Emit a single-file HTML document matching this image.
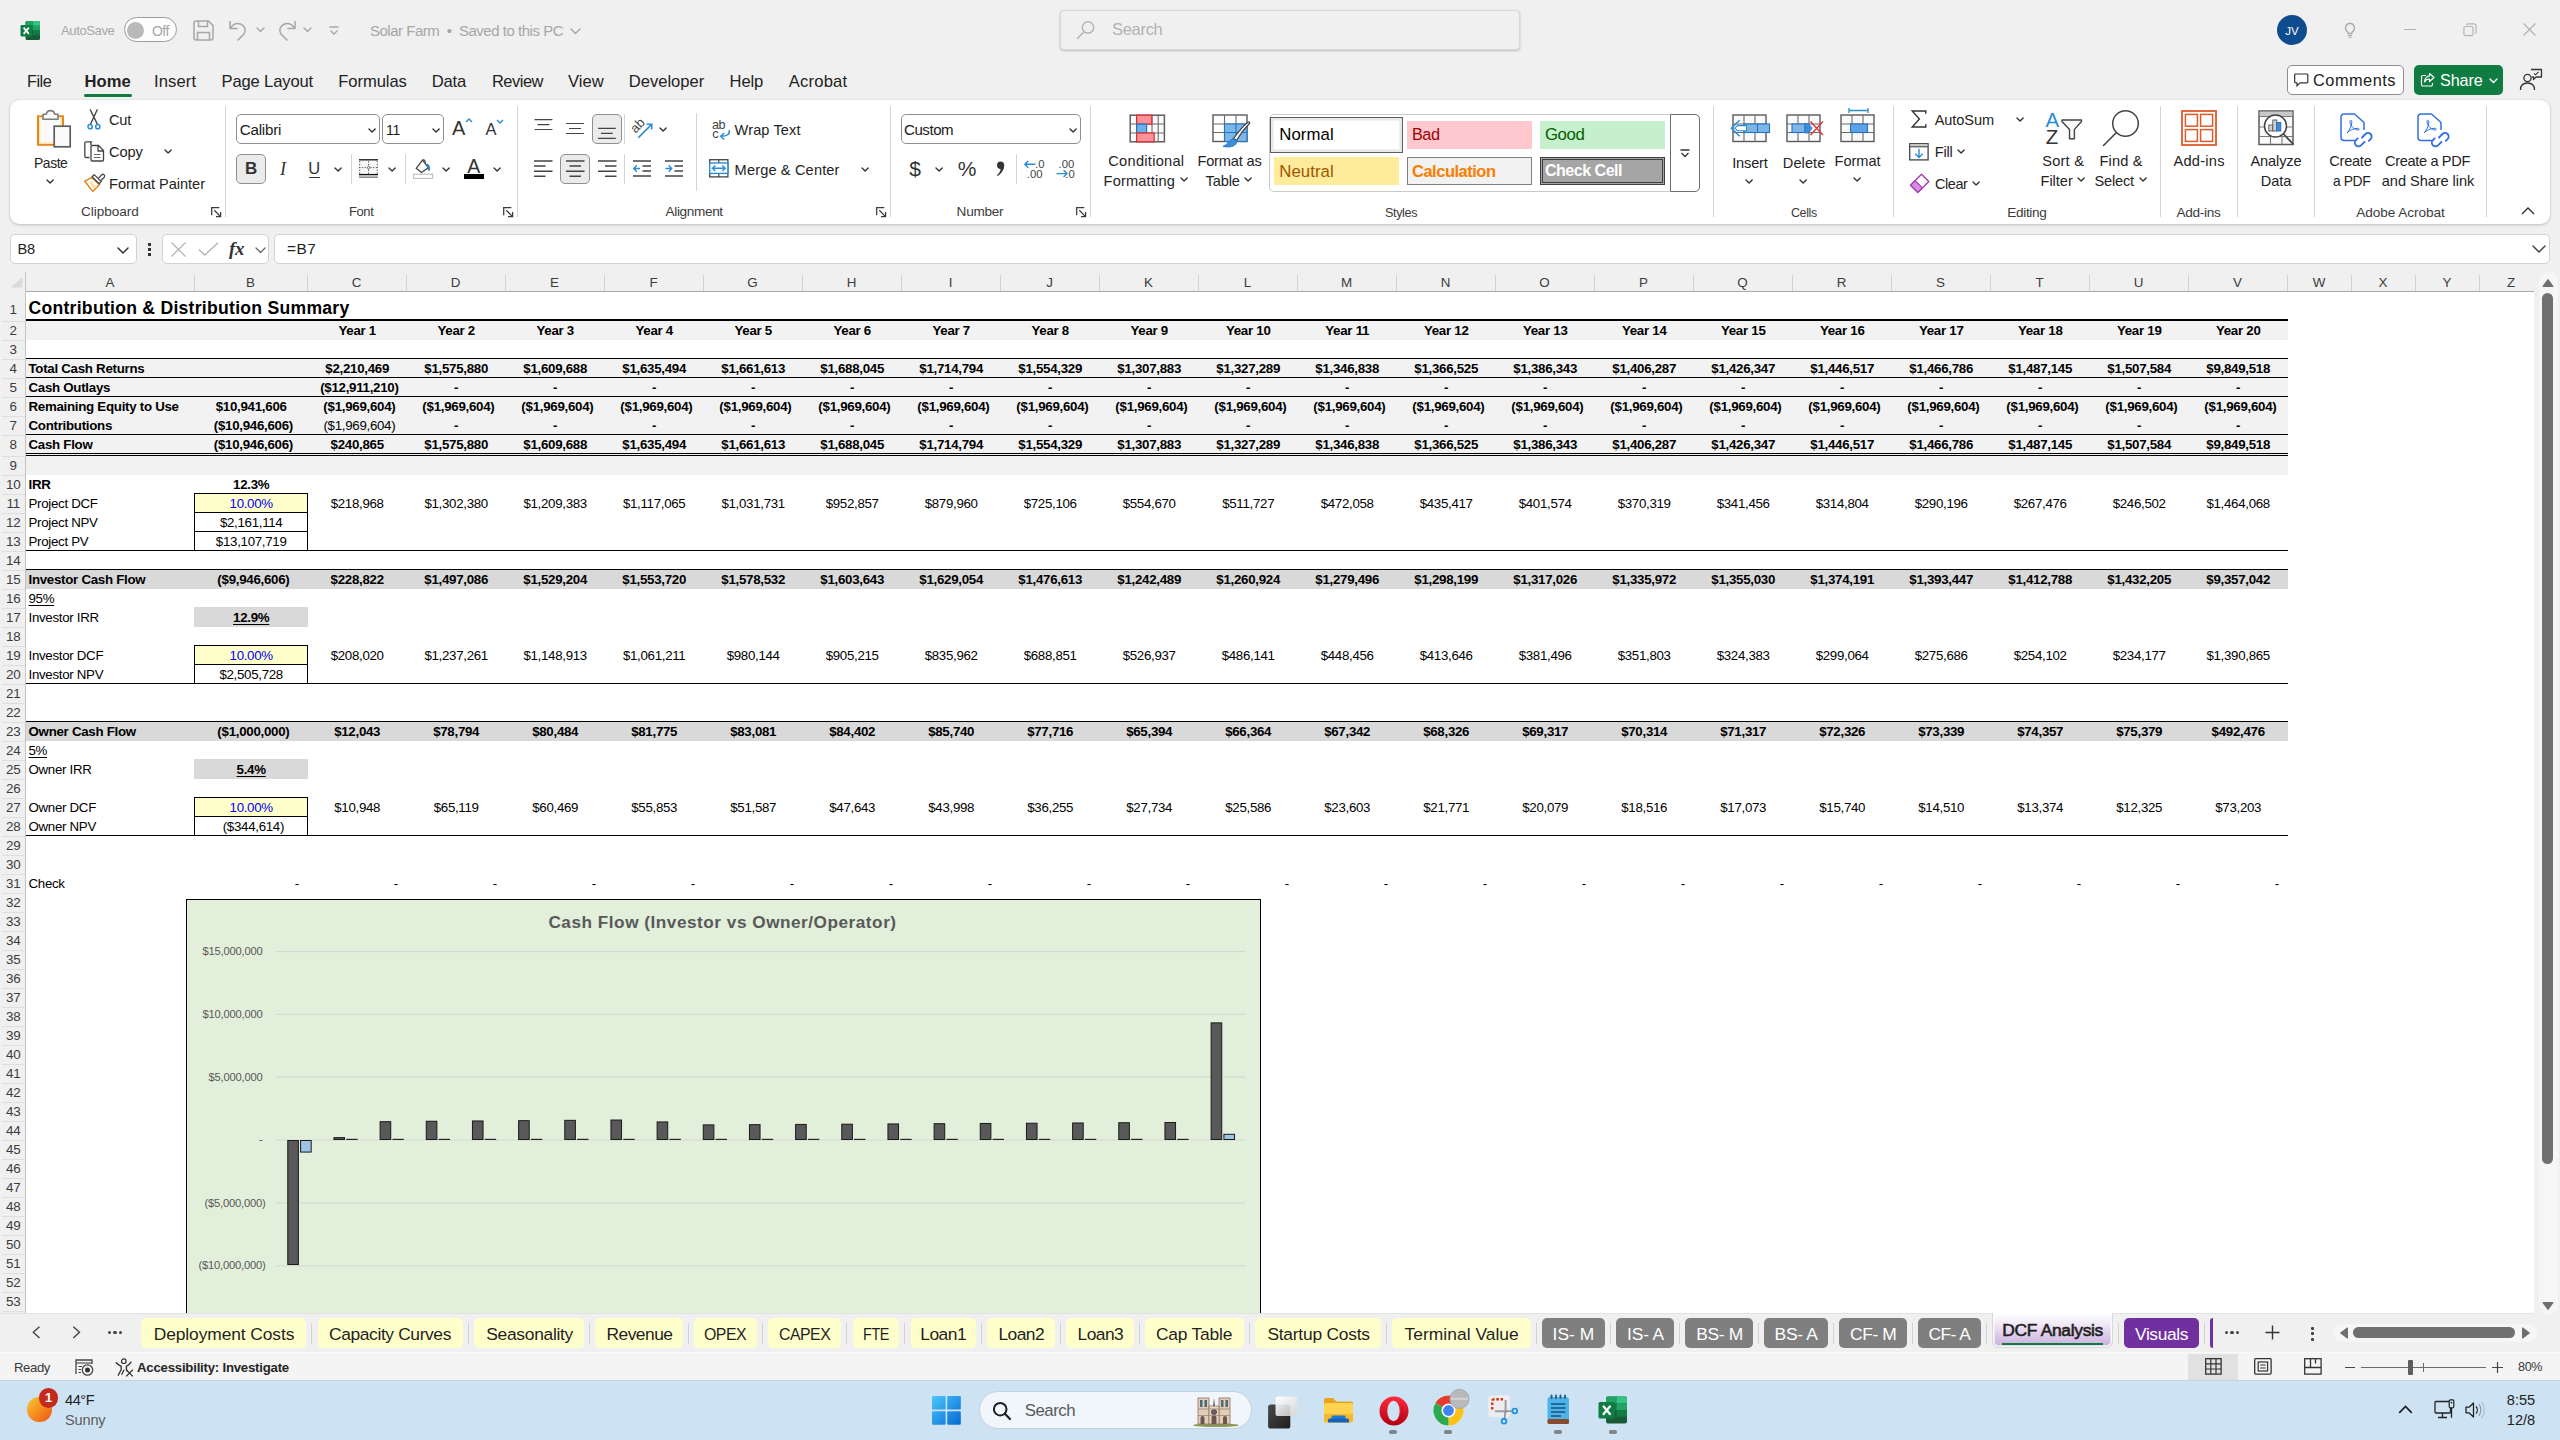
<!DOCTYPE html>
<html><head><meta charset="utf-8"><title>Solar Farm - Excel</title>
<style>
*{box-sizing:border-box}
html,body{margin:0;padding:0}
body{width:2560px;height:1440px;position:relative;overflow:hidden;background:#f0f0f0;font-family:"Liberation Sans",sans-serif;color:#242424}
.a{position:absolute}
.t{position:absolute;white-space:pre;line-height:20px}
svg{display:block;overflow:visible}
</style></head><body>
<div class="a" style="left:26px;top:292px;width:2508px;height:1021px;background:#fff;"></div>
<div class="a" style="left:0px;top:271px;width:2534px;height:21px;background:#f0f0f0;"></div>
<div class="a" style="left:26px;top:291px;width:2508px;height:1.2px;background:#ababab;"></div>
<span class="t" style="top:272.5px;font-size:13.4px;color:#3c3c3c;left:110.0px;transform:translateX(-50%);">A</span>
<div class="a" style="left:193.5px;top:275px;width:1px;height:16px;background:#d2d2d2;"></div>
<span class="t" style="top:272.5px;font-size:13.4px;color:#3c3c3c;left:250.5px;transform:translateX(-50%);">B</span>
<div class="a" style="left:306.5px;top:275px;width:1px;height:16px;background:#d2d2d2;"></div>
<span class="t" style="top:272.5px;font-size:13.4px;color:#3c3c3c;left:356.5px;transform:translateX(-50%);">C</span>
<div class="a" style="left:405.5px;top:275px;width:1px;height:16px;background:#d2d2d2;"></div>
<span class="t" style="top:272.5px;font-size:13.4px;color:#3c3c3c;left:455.5px;transform:translateX(-50%);">D</span>
<div class="a" style="left:504.5px;top:275px;width:1px;height:16px;background:#d2d2d2;"></div>
<span class="t" style="top:272.5px;font-size:13.4px;color:#3c3c3c;left:554.5px;transform:translateX(-50%);">E</span>
<div class="a" style="left:603.5px;top:275px;width:1px;height:16px;background:#d2d2d2;"></div>
<span class="t" style="top:272.5px;font-size:13.4px;color:#3c3c3c;left:653.5px;transform:translateX(-50%);">F</span>
<div class="a" style="left:702.5px;top:275px;width:1px;height:16px;background:#d2d2d2;"></div>
<span class="t" style="top:272.5px;font-size:13.4px;color:#3c3c3c;left:752.5px;transform:translateX(-50%);">G</span>
<div class="a" style="left:801.5px;top:275px;width:1px;height:16px;background:#d2d2d2;"></div>
<span class="t" style="top:272.5px;font-size:13.4px;color:#3c3c3c;left:851.5px;transform:translateX(-50%);">H</span>
<div class="a" style="left:900.5px;top:275px;width:1px;height:16px;background:#d2d2d2;"></div>
<span class="t" style="top:272.5px;font-size:13.4px;color:#3c3c3c;left:950.5px;transform:translateX(-50%);">I</span>
<div class="a" style="left:999.5px;top:275px;width:1px;height:16px;background:#d2d2d2;"></div>
<span class="t" style="top:272.5px;font-size:13.4px;color:#3c3c3c;left:1049.5px;transform:translateX(-50%);">J</span>
<div class="a" style="left:1098.5px;top:275px;width:1px;height:16px;background:#d2d2d2;"></div>
<span class="t" style="top:272.5px;font-size:13.4px;color:#3c3c3c;left:1148.5px;transform:translateX(-50%);">K</span>
<div class="a" style="left:1197.5px;top:275px;width:1px;height:16px;background:#d2d2d2;"></div>
<span class="t" style="top:272.5px;font-size:13.4px;color:#3c3c3c;left:1247.5px;transform:translateX(-50%);">L</span>
<div class="a" style="left:1296.5px;top:275px;width:1px;height:16px;background:#d2d2d2;"></div>
<span class="t" style="top:272.5px;font-size:13.4px;color:#3c3c3c;left:1346.5px;transform:translateX(-50%);">M</span>
<div class="a" style="left:1395.5px;top:275px;width:1px;height:16px;background:#d2d2d2;"></div>
<span class="t" style="top:272.5px;font-size:13.4px;color:#3c3c3c;left:1445.5px;transform:translateX(-50%);">N</span>
<div class="a" style="left:1494.5px;top:275px;width:1px;height:16px;background:#d2d2d2;"></div>
<span class="t" style="top:272.5px;font-size:13.4px;color:#3c3c3c;left:1544.5px;transform:translateX(-50%);">O</span>
<div class="a" style="left:1593.5px;top:275px;width:1px;height:16px;background:#d2d2d2;"></div>
<span class="t" style="top:272.5px;font-size:13.4px;color:#3c3c3c;left:1643.5px;transform:translateX(-50%);">P</span>
<div class="a" style="left:1692.5px;top:275px;width:1px;height:16px;background:#d2d2d2;"></div>
<span class="t" style="top:272.5px;font-size:13.4px;color:#3c3c3c;left:1742.5px;transform:translateX(-50%);">Q</span>
<div class="a" style="left:1791.5px;top:275px;width:1px;height:16px;background:#d2d2d2;"></div>
<span class="t" style="top:272.5px;font-size:13.4px;color:#3c3c3c;left:1841.5px;transform:translateX(-50%);">R</span>
<div class="a" style="left:1890.5px;top:275px;width:1px;height:16px;background:#d2d2d2;"></div>
<span class="t" style="top:272.5px;font-size:13.4px;color:#3c3c3c;left:1940.5px;transform:translateX(-50%);">S</span>
<div class="a" style="left:1989.5px;top:275px;width:1px;height:16px;background:#d2d2d2;"></div>
<span class="t" style="top:272.5px;font-size:13.4px;color:#3c3c3c;left:2039.5px;transform:translateX(-50%);">T</span>
<div class="a" style="left:2088.5px;top:275px;width:1px;height:16px;background:#d2d2d2;"></div>
<span class="t" style="top:272.5px;font-size:13.4px;color:#3c3c3c;left:2138.5px;transform:translateX(-50%);">U</span>
<div class="a" style="left:2187.5px;top:275px;width:1px;height:16px;background:#d2d2d2;"></div>
<span class="t" style="top:272.5px;font-size:13.4px;color:#3c3c3c;left:2237.5px;transform:translateX(-50%);">V</span>
<div class="a" style="left:2286.5px;top:275px;width:1px;height:16px;background:#d2d2d2;"></div>
<span class="t" style="top:272.5px;font-size:13.4px;color:#3c3c3c;left:2319.0px;transform:translateX(-50%);">W</span>
<div class="a" style="left:2350.5px;top:275px;width:1px;height:16px;background:#d2d2d2;"></div>
<span class="t" style="top:272.5px;font-size:13.4px;color:#3c3c3c;left:2383.0px;transform:translateX(-50%);">X</span>
<div class="a" style="left:2414.5px;top:275px;width:1px;height:16px;background:#d2d2d2;"></div>
<span class="t" style="top:272.5px;font-size:13.4px;color:#3c3c3c;left:2447.0px;transform:translateX(-50%);">Y</span>
<div class="a" style="left:2478.5px;top:275px;width:1px;height:16px;background:#d2d2d2;"></div>
<span class="t" style="top:272.5px;font-size:13.4px;color:#3c3c3c;left:2511.0px;transform:translateX(-50%);">Z</span>
<svg class="a" style="left:9.5px;top:277px;" width="13" height="11" viewBox="0 0 13 11"><path d="M12.5 0 L12.5 10.5 L1 10.5 Z" fill="#dadada"/></svg>
<div class="a" style="left:0px;top:292px;width:26px;height:1021px;background:#f0f0f0;"></div>
<div class="a" style="left:25px;top:272px;width:1px;height:1041px;background:#c4c4c4;"></div>
<div class="a" style="left:2px;top:320.5px;width:23px;height:1px;background:#dedede;"></div>
<span class="t" style="top:300.0px;font-size:13.4px;color:#3c3c3c;letter-spacing:-0.300px;left:13.2px;transform:translateX(-50%);">1</span>
<div class="a" style="left:2px;top:339.5px;width:23px;height:1px;background:#dedede;"></div>
<span class="t" style="top:321.0px;font-size:13.4px;color:#3c3c3c;letter-spacing:-0.300px;left:13.2px;transform:translateX(-50%);">2</span>
<div class="a" style="left:2px;top:358.5px;width:23px;height:1px;background:#dedede;"></div>
<span class="t" style="top:340.0px;font-size:13.4px;color:#3c3c3c;letter-spacing:-0.300px;left:13.2px;transform:translateX(-50%);">3</span>
<div class="a" style="left:2px;top:377.5px;width:23px;height:1px;background:#dedede;"></div>
<span class="t" style="top:359.0px;font-size:13.4px;color:#3c3c3c;letter-spacing:-0.300px;left:13.2px;transform:translateX(-50%);">4</span>
<div class="a" style="left:2px;top:396.5px;width:23px;height:1px;background:#dedede;"></div>
<span class="t" style="top:378.0px;font-size:13.4px;color:#3c3c3c;letter-spacing:-0.300px;left:13.2px;transform:translateX(-50%);">5</span>
<div class="a" style="left:2px;top:415.5px;width:23px;height:1px;background:#dedede;"></div>
<span class="t" style="top:397.0px;font-size:13.4px;color:#3c3c3c;letter-spacing:-0.300px;left:13.2px;transform:translateX(-50%);">6</span>
<div class="a" style="left:2px;top:434.5px;width:23px;height:1px;background:#dedede;"></div>
<span class="t" style="top:416.0px;font-size:13.4px;color:#3c3c3c;letter-spacing:-0.300px;left:13.2px;transform:translateX(-50%);">7</span>
<div class="a" style="left:2px;top:455.5px;width:23px;height:1px;background:#dedede;"></div>
<span class="t" style="top:435.0px;font-size:13.4px;color:#3c3c3c;letter-spacing:-0.300px;left:13.2px;transform:translateX(-50%);">8</span>
<div class="a" style="left:2px;top:474.5px;width:23px;height:1px;background:#dedede;"></div>
<span class="t" style="top:456.0px;font-size:13.4px;color:#3c3c3c;letter-spacing:-0.300px;left:13.2px;transform:translateX(-50%);">9</span>
<div class="a" style="left:2px;top:493.5px;width:23px;height:1px;background:#dedede;"></div>
<span class="t" style="top:475.0px;font-size:13.4px;color:#3c3c3c;letter-spacing:-0.300px;left:13.2px;transform:translateX(-50%);">10</span>
<div class="a" style="left:2px;top:512.5px;width:23px;height:1px;background:#dedede;"></div>
<span class="t" style="top:494.0px;font-size:13.4px;color:#3c3c3c;letter-spacing:-0.300px;left:13.2px;transform:translateX(-50%);">11</span>
<div class="a" style="left:2px;top:531.5px;width:23px;height:1px;background:#dedede;"></div>
<span class="t" style="top:513.0px;font-size:13.4px;color:#3c3c3c;letter-spacing:-0.300px;left:13.2px;transform:translateX(-50%);">12</span>
<div class="a" style="left:2px;top:550.5px;width:23px;height:1px;background:#dedede;"></div>
<span class="t" style="top:532.0px;font-size:13.4px;color:#3c3c3c;letter-spacing:-0.300px;left:13.2px;transform:translateX(-50%);">13</span>
<div class="a" style="left:2px;top:569.5px;width:23px;height:1px;background:#dedede;"></div>
<span class="t" style="top:551.0px;font-size:13.4px;color:#3c3c3c;letter-spacing:-0.300px;left:13.2px;transform:translateX(-50%);">14</span>
<div class="a" style="left:2px;top:588.5px;width:23px;height:1px;background:#dedede;"></div>
<span class="t" style="top:570.0px;font-size:13.4px;color:#3c3c3c;letter-spacing:-0.300px;left:13.2px;transform:translateX(-50%);">15</span>
<div class="a" style="left:2px;top:607.5px;width:23px;height:1px;background:#dedede;"></div>
<span class="t" style="top:589.0px;font-size:13.4px;color:#3c3c3c;letter-spacing:-0.300px;left:13.2px;transform:translateX(-50%);">16</span>
<div class="a" style="left:2px;top:626.5px;width:23px;height:1px;background:#dedede;"></div>
<span class="t" style="top:608.0px;font-size:13.4px;color:#3c3c3c;letter-spacing:-0.300px;left:13.2px;transform:translateX(-50%);">17</span>
<div class="a" style="left:2px;top:645.5px;width:23px;height:1px;background:#dedede;"></div>
<span class="t" style="top:627.0px;font-size:13.4px;color:#3c3c3c;letter-spacing:-0.300px;left:13.2px;transform:translateX(-50%);">18</span>
<div class="a" style="left:2px;top:664.5px;width:23px;height:1px;background:#dedede;"></div>
<span class="t" style="top:646.0px;font-size:13.4px;color:#3c3c3c;letter-spacing:-0.300px;left:13.2px;transform:translateX(-50%);">19</span>
<div class="a" style="left:2px;top:683.5px;width:23px;height:1px;background:#dedede;"></div>
<span class="t" style="top:665.0px;font-size:13.4px;color:#3c3c3c;letter-spacing:-0.300px;left:13.2px;transform:translateX(-50%);">20</span>
<div class="a" style="left:2px;top:702.5px;width:23px;height:1px;background:#dedede;"></div>
<span class="t" style="top:684.0px;font-size:13.4px;color:#3c3c3c;letter-spacing:-0.300px;left:13.2px;transform:translateX(-50%);">21</span>
<div class="a" style="left:2px;top:721.5px;width:23px;height:1px;background:#dedede;"></div>
<span class="t" style="top:703.0px;font-size:13.4px;color:#3c3c3c;letter-spacing:-0.300px;left:13.2px;transform:translateX(-50%);">22</span>
<div class="a" style="left:2px;top:740.5px;width:23px;height:1px;background:#dedede;"></div>
<span class="t" style="top:722.0px;font-size:13.4px;color:#3c3c3c;letter-spacing:-0.300px;left:13.2px;transform:translateX(-50%);">23</span>
<div class="a" style="left:2px;top:759.5px;width:23px;height:1px;background:#dedede;"></div>
<span class="t" style="top:741.0px;font-size:13.4px;color:#3c3c3c;letter-spacing:-0.300px;left:13.2px;transform:translateX(-50%);">24</span>
<div class="a" style="left:2px;top:778.5px;width:23px;height:1px;background:#dedede;"></div>
<span class="t" style="top:760.0px;font-size:13.4px;color:#3c3c3c;letter-spacing:-0.300px;left:13.2px;transform:translateX(-50%);">25</span>
<div class="a" style="left:2px;top:797.5px;width:23px;height:1px;background:#dedede;"></div>
<span class="t" style="top:779.0px;font-size:13.4px;color:#3c3c3c;letter-spacing:-0.300px;left:13.2px;transform:translateX(-50%);">26</span>
<div class="a" style="left:2px;top:816.5px;width:23px;height:1px;background:#dedede;"></div>
<span class="t" style="top:798.0px;font-size:13.4px;color:#3c3c3c;letter-spacing:-0.300px;left:13.2px;transform:translateX(-50%);">27</span>
<div class="a" style="left:2px;top:835.5px;width:23px;height:1px;background:#dedede;"></div>
<span class="t" style="top:817.0px;font-size:13.4px;color:#3c3c3c;letter-spacing:-0.300px;left:13.2px;transform:translateX(-50%);">28</span>
<div class="a" style="left:2px;top:854.5px;width:23px;height:1px;background:#dedede;"></div>
<span class="t" style="top:836.0px;font-size:13.4px;color:#3c3c3c;letter-spacing:-0.300px;left:13.2px;transform:translateX(-50%);">29</span>
<div class="a" style="left:2px;top:873.5px;width:23px;height:1px;background:#dedede;"></div>
<span class="t" style="top:855.0px;font-size:13.4px;color:#3c3c3c;letter-spacing:-0.300px;left:13.2px;transform:translateX(-50%);">30</span>
<div class="a" style="left:2px;top:892.5px;width:23px;height:1px;background:#dedede;"></div>
<span class="t" style="top:874.0px;font-size:13.4px;color:#3c3c3c;letter-spacing:-0.300px;left:13.2px;transform:translateX(-50%);">31</span>
<div class="a" style="left:2px;top:911.5px;width:23px;height:1px;background:#dedede;"></div>
<span class="t" style="top:893.0px;font-size:13.4px;color:#3c3c3c;letter-spacing:-0.300px;left:13.2px;transform:translateX(-50%);">32</span>
<div class="a" style="left:2px;top:930.5px;width:23px;height:1px;background:#dedede;"></div>
<span class="t" style="top:912.0px;font-size:13.4px;color:#3c3c3c;letter-spacing:-0.300px;left:13.2px;transform:translateX(-50%);">33</span>
<div class="a" style="left:2px;top:949.5px;width:23px;height:1px;background:#dedede;"></div>
<span class="t" style="top:931.0px;font-size:13.4px;color:#3c3c3c;letter-spacing:-0.300px;left:13.2px;transform:translateX(-50%);">34</span>
<div class="a" style="left:2px;top:968.5px;width:23px;height:1px;background:#dedede;"></div>
<span class="t" style="top:950.0px;font-size:13.4px;color:#3c3c3c;letter-spacing:-0.300px;left:13.2px;transform:translateX(-50%);">35</span>
<div class="a" style="left:2px;top:987.5px;width:23px;height:1px;background:#dedede;"></div>
<span class="t" style="top:969.0px;font-size:13.4px;color:#3c3c3c;letter-spacing:-0.300px;left:13.2px;transform:translateX(-50%);">36</span>
<div class="a" style="left:2px;top:1006.5px;width:23px;height:1px;background:#dedede;"></div>
<span class="t" style="top:988.0px;font-size:13.4px;color:#3c3c3c;letter-spacing:-0.300px;left:13.2px;transform:translateX(-50%);">37</span>
<div class="a" style="left:2px;top:1025.5px;width:23px;height:1px;background:#dedede;"></div>
<span class="t" style="top:1007.0px;font-size:13.4px;color:#3c3c3c;letter-spacing:-0.300px;left:13.2px;transform:translateX(-50%);">38</span>
<div class="a" style="left:2px;top:1044.5px;width:23px;height:1px;background:#dedede;"></div>
<span class="t" style="top:1026.0px;font-size:13.4px;color:#3c3c3c;letter-spacing:-0.300px;left:13.2px;transform:translateX(-50%);">39</span>
<div class="a" style="left:2px;top:1063.5px;width:23px;height:1px;background:#dedede;"></div>
<span class="t" style="top:1045.0px;font-size:13.4px;color:#3c3c3c;letter-spacing:-0.300px;left:13.2px;transform:translateX(-50%);">40</span>
<div class="a" style="left:2px;top:1082.5px;width:23px;height:1px;background:#dedede;"></div>
<span class="t" style="top:1064.0px;font-size:13.4px;color:#3c3c3c;letter-spacing:-0.300px;left:13.2px;transform:translateX(-50%);">41</span>
<div class="a" style="left:2px;top:1101.5px;width:23px;height:1px;background:#dedede;"></div>
<span class="t" style="top:1083.0px;font-size:13.4px;color:#3c3c3c;letter-spacing:-0.300px;left:13.2px;transform:translateX(-50%);">42</span>
<div class="a" style="left:2px;top:1120.5px;width:23px;height:1px;background:#dedede;"></div>
<span class="t" style="top:1102.0px;font-size:13.4px;color:#3c3c3c;letter-spacing:-0.300px;left:13.2px;transform:translateX(-50%);">43</span>
<div class="a" style="left:2px;top:1139.5px;width:23px;height:1px;background:#dedede;"></div>
<span class="t" style="top:1121.0px;font-size:13.4px;color:#3c3c3c;letter-spacing:-0.300px;left:13.2px;transform:translateX(-50%);">44</span>
<div class="a" style="left:2px;top:1158.5px;width:23px;height:1px;background:#dedede;"></div>
<span class="t" style="top:1140.0px;font-size:13.4px;color:#3c3c3c;letter-spacing:-0.300px;left:13.2px;transform:translateX(-50%);">45</span>
<div class="a" style="left:2px;top:1177.5px;width:23px;height:1px;background:#dedede;"></div>
<span class="t" style="top:1159.0px;font-size:13.4px;color:#3c3c3c;letter-spacing:-0.300px;left:13.2px;transform:translateX(-50%);">46</span>
<div class="a" style="left:2px;top:1196.5px;width:23px;height:1px;background:#dedede;"></div>
<span class="t" style="top:1178.0px;font-size:13.4px;color:#3c3c3c;letter-spacing:-0.300px;left:13.2px;transform:translateX(-50%);">47</span>
<div class="a" style="left:2px;top:1215.5px;width:23px;height:1px;background:#dedede;"></div>
<span class="t" style="top:1197.0px;font-size:13.4px;color:#3c3c3c;letter-spacing:-0.300px;left:13.2px;transform:translateX(-50%);">48</span>
<div class="a" style="left:2px;top:1234.5px;width:23px;height:1px;background:#dedede;"></div>
<span class="t" style="top:1216.0px;font-size:13.4px;color:#3c3c3c;letter-spacing:-0.300px;left:13.2px;transform:translateX(-50%);">49</span>
<div class="a" style="left:2px;top:1253.5px;width:23px;height:1px;background:#dedede;"></div>
<span class="t" style="top:1235.0px;font-size:13.4px;color:#3c3c3c;letter-spacing:-0.300px;left:13.2px;transform:translateX(-50%);">50</span>
<div class="a" style="left:2px;top:1272.5px;width:23px;height:1px;background:#dedede;"></div>
<span class="t" style="top:1254.0px;font-size:13.4px;color:#3c3c3c;letter-spacing:-0.300px;left:13.2px;transform:translateX(-50%);">51</span>
<div class="a" style="left:2px;top:1291.5px;width:23px;height:1px;background:#dedede;"></div>
<span class="t" style="top:1273.0px;font-size:13.4px;color:#3c3c3c;letter-spacing:-0.300px;left:13.2px;transform:translateX(-50%);">52</span>
<div class="a" style="left:2px;top:1310.5px;width:23px;height:1px;background:#dedede;"></div>
<span class="t" style="top:1292.0px;font-size:13.4px;color:#3c3c3c;letter-spacing:-0.300px;left:13.2px;transform:translateX(-50%);">53</span>
<div class="a" style="left:26px;top:321px;width:2262px;height:19px;background:#f2f2f2;"></div>
<div class="a" style="left:26px;top:359px;width:2262px;height:116px;background:#f2f2f2;"></div>
<div class="a" style="left:26px;top:570px;width:2262px;height:19px;background:#d9d9d9;"></div>
<div class="a" style="left:26px;top:722px;width:2262px;height:19px;background:#d9d9d9;"></div>
<div class="a" style="left:194px;top:607px;width:114px;height:20px;background:#d9d9d9;"></div>
<div class="a" style="left:194px;top:759px;width:114px;height:20px;background:#d9d9d9;"></div>
<div class="a" style="left:26px;top:319px;width:2262px;height:2px;background:#000;"></div>
<div class="a" style="left:26px;top:358px;width:2262px;height:1px;background:#000;"></div>
<div class="a" style="left:26px;top:377px;width:2262px;height:1px;background:#000;"></div>
<div class="a" style="left:26px;top:396px;width:2262px;height:1px;background:#000;"></div>
<div class="a" style="left:26px;top:434px;width:2262px;height:1px;background:#000;"></div>
<div class="a" style="left:26px;top:453px;width:2262px;height:1px;background:#000;"></div>
<div class="a" style="left:26px;top:455px;width:2262px;height:1px;background:#000;"></div>
<div class="a" style="left:26px;top:550px;width:2262px;height:1px;background:#000;"></div>
<div class="a" style="left:26px;top:569px;width:2262px;height:1px;background:#000;"></div>
<div class="a" style="left:26px;top:683px;width:2262px;height:1px;background:#000;"></div>
<div class="a" style="left:26px;top:721px;width:2262px;height:1px;background:#000;"></div>
<div class="a" style="left:26px;top:835px;width:2262px;height:1px;background:#000;"></div>
<div class="a" style="left:194px;top:493px;width:113px;height:20px;background:#ffffcc;"></div>
<div class="a" style="left:194px;top:493px;width:1px;height:58px;background:#000;"></div>
<div class="a" style="left:306.5px;top:493px;width:1px;height:58px;background:#000;"></div>
<div class="a" style="left:194px;top:493px;width:113px;height:1px;background:#000;"></div>
<div class="a" style="left:194px;top:512px;width:113px;height:1px;background:#000;"></div>
<div class="a" style="left:194px;top:531px;width:113px;height:1px;background:#000;"></div>
<div class="a" style="left:194px;top:645px;width:113px;height:20px;background:#ffffcc;"></div>
<div class="a" style="left:194px;top:645px;width:1px;height:39px;background:#000;"></div>
<div class="a" style="left:306.5px;top:645px;width:1px;height:39px;background:#000;"></div>
<div class="a" style="left:194px;top:645px;width:113px;height:1px;background:#000;"></div>
<div class="a" style="left:194px;top:664px;width:113px;height:1px;background:#000;"></div>
<div class="a" style="left:194px;top:797px;width:113px;height:20px;background:#ffffcc;"></div>
<div class="a" style="left:194px;top:797px;width:1px;height:39px;background:#000;"></div>
<div class="a" style="left:306.5px;top:797px;width:1px;height:39px;background:#000;"></div>
<div class="a" style="left:194px;top:797px;width:113px;height:1px;background:#000;"></div>
<div class="a" style="left:194px;top:816px;width:113px;height:1px;background:#000;"></div>
<span class="t" style="top:297.5px;font-size:17.6px;color:#000;font-weight:700;letter-spacing:0.263px;left:28.5px;">Contribution &amp; Distribution Summary</span>
<span class="t" style="top:320.8px;font-size:13.3px;color:#000;font-weight:700;letter-spacing:-0.280px;left:357.2px;transform:translateX(-50%);">Year 1</span>
<span class="t" style="top:320.8px;font-size:13.3px;color:#000;font-weight:700;letter-spacing:-0.280px;left:456.2px;transform:translateX(-50%);">Year 2</span>
<span class="t" style="top:320.8px;font-size:13.3px;color:#000;font-weight:700;letter-spacing:-0.280px;left:555.2px;transform:translateX(-50%);">Year 3</span>
<span class="t" style="top:320.8px;font-size:13.3px;color:#000;font-weight:700;letter-spacing:-0.280px;left:654.2px;transform:translateX(-50%);">Year 4</span>
<span class="t" style="top:320.8px;font-size:13.3px;color:#000;font-weight:700;letter-spacing:-0.280px;left:753.2px;transform:translateX(-50%);">Year 5</span>
<span class="t" style="top:320.8px;font-size:13.3px;color:#000;font-weight:700;letter-spacing:-0.280px;left:852.2px;transform:translateX(-50%);">Year 6</span>
<span class="t" style="top:320.8px;font-size:13.3px;color:#000;font-weight:700;letter-spacing:-0.280px;left:951.2px;transform:translateX(-50%);">Year 7</span>
<span class="t" style="top:320.8px;font-size:13.3px;color:#000;font-weight:700;letter-spacing:-0.280px;left:1050.2px;transform:translateX(-50%);">Year 8</span>
<span class="t" style="top:320.8px;font-size:13.3px;color:#000;font-weight:700;letter-spacing:-0.280px;left:1149.2px;transform:translateX(-50%);">Year 9</span>
<span class="t" style="top:320.8px;font-size:13.3px;color:#000;font-weight:700;letter-spacing:-0.280px;left:1248.2px;transform:translateX(-50%);">Year 10</span>
<span class="t" style="top:320.8px;font-size:13.3px;color:#000;font-weight:700;letter-spacing:-0.280px;left:1347.2px;transform:translateX(-50%);">Year 11</span>
<span class="t" style="top:320.8px;font-size:13.3px;color:#000;font-weight:700;letter-spacing:-0.280px;left:1446.2px;transform:translateX(-50%);">Year 12</span>
<span class="t" style="top:320.8px;font-size:13.3px;color:#000;font-weight:700;letter-spacing:-0.280px;left:1545.2px;transform:translateX(-50%);">Year 13</span>
<span class="t" style="top:320.8px;font-size:13.3px;color:#000;font-weight:700;letter-spacing:-0.280px;left:1644.2px;transform:translateX(-50%);">Year 14</span>
<span class="t" style="top:320.8px;font-size:13.3px;color:#000;font-weight:700;letter-spacing:-0.280px;left:1743.2px;transform:translateX(-50%);">Year 15</span>
<span class="t" style="top:320.8px;font-size:13.3px;color:#000;font-weight:700;letter-spacing:-0.280px;left:1842.2px;transform:translateX(-50%);">Year 16</span>
<span class="t" style="top:320.8px;font-size:13.3px;color:#000;font-weight:700;letter-spacing:-0.280px;left:1941.2px;transform:translateX(-50%);">Year 17</span>
<span class="t" style="top:320.8px;font-size:13.3px;color:#000;font-weight:700;letter-spacing:-0.280px;left:2040.2px;transform:translateX(-50%);">Year 18</span>
<span class="t" style="top:320.8px;font-size:13.3px;color:#000;font-weight:700;letter-spacing:-0.280px;left:2139.2px;transform:translateX(-50%);">Year 19</span>
<span class="t" style="top:320.8px;font-size:13.3px;color:#000;font-weight:700;letter-spacing:-0.280px;left:2238.2px;transform:translateX(-50%);">Year 20</span>
<span class="t" style="top:358.8px;font-size:13.3px;color:#000;font-weight:700;letter-spacing:-0.280px;left:28.5px;">Total Cash Returns</span>
<span class="t" style="top:358.8px;font-size:13.3px;color:#000;font-weight:700;letter-spacing:-0.280px;left:357.2px;transform:translateX(-50%);">$2,210,469</span>
<span class="t" style="top:358.8px;font-size:13.3px;color:#000;font-weight:700;letter-spacing:-0.280px;left:456.2px;transform:translateX(-50%);">$1,575,880</span>
<span class="t" style="top:358.8px;font-size:13.3px;color:#000;font-weight:700;letter-spacing:-0.280px;left:555.2px;transform:translateX(-50%);">$1,609,688</span>
<span class="t" style="top:358.8px;font-size:13.3px;color:#000;font-weight:700;letter-spacing:-0.280px;left:654.2px;transform:translateX(-50%);">$1,635,494</span>
<span class="t" style="top:358.8px;font-size:13.3px;color:#000;font-weight:700;letter-spacing:-0.280px;left:753.2px;transform:translateX(-50%);">$1,661,613</span>
<span class="t" style="top:358.8px;font-size:13.3px;color:#000;font-weight:700;letter-spacing:-0.280px;left:852.2px;transform:translateX(-50%);">$1,688,045</span>
<span class="t" style="top:358.8px;font-size:13.3px;color:#000;font-weight:700;letter-spacing:-0.280px;left:951.2px;transform:translateX(-50%);">$1,714,794</span>
<span class="t" style="top:358.8px;font-size:13.3px;color:#000;font-weight:700;letter-spacing:-0.280px;left:1050.2px;transform:translateX(-50%);">$1,554,329</span>
<span class="t" style="top:358.8px;font-size:13.3px;color:#000;font-weight:700;letter-spacing:-0.280px;left:1149.2px;transform:translateX(-50%);">$1,307,883</span>
<span class="t" style="top:358.8px;font-size:13.3px;color:#000;font-weight:700;letter-spacing:-0.280px;left:1248.2px;transform:translateX(-50%);">$1,327,289</span>
<span class="t" style="top:358.8px;font-size:13.3px;color:#000;font-weight:700;letter-spacing:-0.280px;left:1347.2px;transform:translateX(-50%);">$1,346,838</span>
<span class="t" style="top:358.8px;font-size:13.3px;color:#000;font-weight:700;letter-spacing:-0.280px;left:1446.2px;transform:translateX(-50%);">$1,366,525</span>
<span class="t" style="top:358.8px;font-size:13.3px;color:#000;font-weight:700;letter-spacing:-0.280px;left:1545.2px;transform:translateX(-50%);">$1,386,343</span>
<span class="t" style="top:358.8px;font-size:13.3px;color:#000;font-weight:700;letter-spacing:-0.280px;left:1644.2px;transform:translateX(-50%);">$1,406,287</span>
<span class="t" style="top:358.8px;font-size:13.3px;color:#000;font-weight:700;letter-spacing:-0.280px;left:1743.2px;transform:translateX(-50%);">$1,426,347</span>
<span class="t" style="top:358.8px;font-size:13.3px;color:#000;font-weight:700;letter-spacing:-0.280px;left:1842.2px;transform:translateX(-50%);">$1,446,517</span>
<span class="t" style="top:358.8px;font-size:13.3px;color:#000;font-weight:700;letter-spacing:-0.280px;left:1941.2px;transform:translateX(-50%);">$1,466,786</span>
<span class="t" style="top:358.8px;font-size:13.3px;color:#000;font-weight:700;letter-spacing:-0.280px;left:2040.2px;transform:translateX(-50%);">$1,487,145</span>
<span class="t" style="top:358.8px;font-size:13.3px;color:#000;font-weight:700;letter-spacing:-0.280px;left:2139.2px;transform:translateX(-50%);">$1,507,584</span>
<span class="t" style="top:358.8px;font-size:13.3px;color:#000;font-weight:700;letter-spacing:-0.280px;left:2238.2px;transform:translateX(-50%);">$9,849,518</span>
<span class="t" style="top:377.8px;font-size:13.3px;color:#000;font-weight:700;letter-spacing:-0.280px;left:28.5px;">Cash Outlays</span>
<span class="t" style="top:377.8px;font-size:13.3px;color:#000;font-weight:700;letter-spacing:-0.280px;left:359.4px;transform:translateX(-50%);">($12,911,210)</span>
<span class="t" style="top:377.8px;font-size:13.3px;color:#000;font-weight:700;letter-spacing:-0.280px;left:456.2px;transform:translateX(-50%);">-</span>
<span class="t" style="top:377.8px;font-size:13.3px;color:#000;font-weight:700;letter-spacing:-0.280px;left:555.2px;transform:translateX(-50%);">-</span>
<span class="t" style="top:377.8px;font-size:13.3px;color:#000;font-weight:700;letter-spacing:-0.280px;left:654.2px;transform:translateX(-50%);">-</span>
<span class="t" style="top:377.8px;font-size:13.3px;color:#000;font-weight:700;letter-spacing:-0.280px;left:753.2px;transform:translateX(-50%);">-</span>
<span class="t" style="top:377.8px;font-size:13.3px;color:#000;font-weight:700;letter-spacing:-0.280px;left:852.2px;transform:translateX(-50%);">-</span>
<span class="t" style="top:377.8px;font-size:13.3px;color:#000;font-weight:700;letter-spacing:-0.280px;left:951.2px;transform:translateX(-50%);">-</span>
<span class="t" style="top:377.8px;font-size:13.3px;color:#000;font-weight:700;letter-spacing:-0.280px;left:1050.2px;transform:translateX(-50%);">-</span>
<span class="t" style="top:377.8px;font-size:13.3px;color:#000;font-weight:700;letter-spacing:-0.280px;left:1149.2px;transform:translateX(-50%);">-</span>
<span class="t" style="top:377.8px;font-size:13.3px;color:#000;font-weight:700;letter-spacing:-0.280px;left:1248.2px;transform:translateX(-50%);">-</span>
<span class="t" style="top:377.8px;font-size:13.3px;color:#000;font-weight:700;letter-spacing:-0.280px;left:1347.2px;transform:translateX(-50%);">-</span>
<span class="t" style="top:377.8px;font-size:13.3px;color:#000;font-weight:700;letter-spacing:-0.280px;left:1446.2px;transform:translateX(-50%);">-</span>
<span class="t" style="top:377.8px;font-size:13.3px;color:#000;font-weight:700;letter-spacing:-0.280px;left:1545.2px;transform:translateX(-50%);">-</span>
<span class="t" style="top:377.8px;font-size:13.3px;color:#000;font-weight:700;letter-spacing:-0.280px;left:1644.2px;transform:translateX(-50%);">-</span>
<span class="t" style="top:377.8px;font-size:13.3px;color:#000;font-weight:700;letter-spacing:-0.280px;left:1743.2px;transform:translateX(-50%);">-</span>
<span class="t" style="top:377.8px;font-size:13.3px;color:#000;font-weight:700;letter-spacing:-0.280px;left:1842.2px;transform:translateX(-50%);">-</span>
<span class="t" style="top:377.8px;font-size:13.3px;color:#000;font-weight:700;letter-spacing:-0.280px;left:1941.2px;transform:translateX(-50%);">-</span>
<span class="t" style="top:377.8px;font-size:13.3px;color:#000;font-weight:700;letter-spacing:-0.280px;left:2040.2px;transform:translateX(-50%);">-</span>
<span class="t" style="top:377.8px;font-size:13.3px;color:#000;font-weight:700;letter-spacing:-0.280px;left:2139.2px;transform:translateX(-50%);">-</span>
<span class="t" style="top:377.8px;font-size:13.3px;color:#000;font-weight:700;letter-spacing:-0.280px;left:2238.2px;transform:translateX(-50%);">-</span>
<span class="t" style="top:396.8px;font-size:13.3px;color:#000;font-weight:700;letter-spacing:-0.280px;left:28.5px;">Remaining Equity to Use</span>
<span class="t" style="top:396.8px;font-size:13.3px;color:#000;font-weight:700;letter-spacing:-0.280px;left:251.2px;transform:translateX(-50%);">$10,941,606</span>
<span class="t" style="top:396.8px;font-size:13.3px;color:#000;font-weight:700;letter-spacing:-0.280px;left:359.4px;transform:translateX(-50%);">($1,969,604)</span>
<span class="t" style="top:396.8px;font-size:13.3px;color:#000;font-weight:700;letter-spacing:-0.280px;left:458.4px;transform:translateX(-50%);">($1,969,604)</span>
<span class="t" style="top:396.8px;font-size:13.3px;color:#000;font-weight:700;letter-spacing:-0.280px;left:557.4px;transform:translateX(-50%);">($1,969,604)</span>
<span class="t" style="top:396.8px;font-size:13.3px;color:#000;font-weight:700;letter-spacing:-0.280px;left:656.4px;transform:translateX(-50%);">($1,969,604)</span>
<span class="t" style="top:396.8px;font-size:13.3px;color:#000;font-weight:700;letter-spacing:-0.280px;left:755.4px;transform:translateX(-50%);">($1,969,604)</span>
<span class="t" style="top:396.8px;font-size:13.3px;color:#000;font-weight:700;letter-spacing:-0.280px;left:854.4px;transform:translateX(-50%);">($1,969,604)</span>
<span class="t" style="top:396.8px;font-size:13.3px;color:#000;font-weight:700;letter-spacing:-0.280px;left:953.4px;transform:translateX(-50%);">($1,969,604)</span>
<span class="t" style="top:396.8px;font-size:13.3px;color:#000;font-weight:700;letter-spacing:-0.280px;left:1052.4px;transform:translateX(-50%);">($1,969,604)</span>
<span class="t" style="top:396.8px;font-size:13.3px;color:#000;font-weight:700;letter-spacing:-0.280px;left:1151.4px;transform:translateX(-50%);">($1,969,604)</span>
<span class="t" style="top:396.8px;font-size:13.3px;color:#000;font-weight:700;letter-spacing:-0.280px;left:1250.4px;transform:translateX(-50%);">($1,969,604)</span>
<span class="t" style="top:396.8px;font-size:13.3px;color:#000;font-weight:700;letter-spacing:-0.280px;left:1349.4px;transform:translateX(-50%);">($1,969,604)</span>
<span class="t" style="top:396.8px;font-size:13.3px;color:#000;font-weight:700;letter-spacing:-0.280px;left:1448.4px;transform:translateX(-50%);">($1,969,604)</span>
<span class="t" style="top:396.8px;font-size:13.3px;color:#000;font-weight:700;letter-spacing:-0.280px;left:1547.4px;transform:translateX(-50%);">($1,969,604)</span>
<span class="t" style="top:396.8px;font-size:13.3px;color:#000;font-weight:700;letter-spacing:-0.280px;left:1646.4px;transform:translateX(-50%);">($1,969,604)</span>
<span class="t" style="top:396.8px;font-size:13.3px;color:#000;font-weight:700;letter-spacing:-0.280px;left:1745.4px;transform:translateX(-50%);">($1,969,604)</span>
<span class="t" style="top:396.8px;font-size:13.3px;color:#000;font-weight:700;letter-spacing:-0.280px;left:1844.4px;transform:translateX(-50%);">($1,969,604)</span>
<span class="t" style="top:396.8px;font-size:13.3px;color:#000;font-weight:700;letter-spacing:-0.280px;left:1943.4px;transform:translateX(-50%);">($1,969,604)</span>
<span class="t" style="top:396.8px;font-size:13.3px;color:#000;font-weight:700;letter-spacing:-0.280px;left:2042.4px;transform:translateX(-50%);">($1,969,604)</span>
<span class="t" style="top:396.8px;font-size:13.3px;color:#000;font-weight:700;letter-spacing:-0.280px;left:2141.4px;transform:translateX(-50%);">($1,969,604)</span>
<span class="t" style="top:396.8px;font-size:13.3px;color:#000;font-weight:700;letter-spacing:-0.280px;left:2240.4px;transform:translateX(-50%);">($1,969,604)</span>
<span class="t" style="top:415.8px;font-size:13.3px;color:#000;font-weight:700;letter-spacing:-0.280px;left:28.5px;">Contributions</span>
<span class="t" style="top:415.8px;font-size:13.3px;color:#000;font-weight:700;letter-spacing:-0.280px;left:253.4px;transform:translateX(-50%);">($10,946,606)</span>
<span class="t" style="top:415.8px;font-size:13.3px;color:#000;letter-spacing:-0.300px;left:359.4px;transform:translateX(-50%);">($1,969,604)</span>
<span class="t" style="top:415.8px;font-size:13.3px;color:#000;font-weight:700;letter-spacing:-0.280px;left:456.2px;transform:translateX(-50%);">-</span>
<span class="t" style="top:415.8px;font-size:13.3px;color:#000;font-weight:700;letter-spacing:-0.280px;left:555.2px;transform:translateX(-50%);">-</span>
<span class="t" style="top:415.8px;font-size:13.3px;color:#000;font-weight:700;letter-spacing:-0.280px;left:654.2px;transform:translateX(-50%);">-</span>
<span class="t" style="top:415.8px;font-size:13.3px;color:#000;font-weight:700;letter-spacing:-0.280px;left:753.2px;transform:translateX(-50%);">-</span>
<span class="t" style="top:415.8px;font-size:13.3px;color:#000;font-weight:700;letter-spacing:-0.280px;left:852.2px;transform:translateX(-50%);">-</span>
<span class="t" style="top:415.8px;font-size:13.3px;color:#000;font-weight:700;letter-spacing:-0.280px;left:951.2px;transform:translateX(-50%);">-</span>
<span class="t" style="top:415.8px;font-size:13.3px;color:#000;font-weight:700;letter-spacing:-0.280px;left:1050.2px;transform:translateX(-50%);">-</span>
<span class="t" style="top:415.8px;font-size:13.3px;color:#000;font-weight:700;letter-spacing:-0.280px;left:1149.2px;transform:translateX(-50%);">-</span>
<span class="t" style="top:415.8px;font-size:13.3px;color:#000;font-weight:700;letter-spacing:-0.280px;left:1248.2px;transform:translateX(-50%);">-</span>
<span class="t" style="top:415.8px;font-size:13.3px;color:#000;font-weight:700;letter-spacing:-0.280px;left:1347.2px;transform:translateX(-50%);">-</span>
<span class="t" style="top:415.8px;font-size:13.3px;color:#000;font-weight:700;letter-spacing:-0.280px;left:1446.2px;transform:translateX(-50%);">-</span>
<span class="t" style="top:415.8px;font-size:13.3px;color:#000;font-weight:700;letter-spacing:-0.280px;left:1545.2px;transform:translateX(-50%);">-</span>
<span class="t" style="top:415.8px;font-size:13.3px;color:#000;font-weight:700;letter-spacing:-0.280px;left:1644.2px;transform:translateX(-50%);">-</span>
<span class="t" style="top:415.8px;font-size:13.3px;color:#000;font-weight:700;letter-spacing:-0.280px;left:1743.2px;transform:translateX(-50%);">-</span>
<span class="t" style="top:415.8px;font-size:13.3px;color:#000;font-weight:700;letter-spacing:-0.280px;left:1842.2px;transform:translateX(-50%);">-</span>
<span class="t" style="top:415.8px;font-size:13.3px;color:#000;font-weight:700;letter-spacing:-0.280px;left:1941.2px;transform:translateX(-50%);">-</span>
<span class="t" style="top:415.8px;font-size:13.3px;color:#000;font-weight:700;letter-spacing:-0.280px;left:2040.2px;transform:translateX(-50%);">-</span>
<span class="t" style="top:415.8px;font-size:13.3px;color:#000;font-weight:700;letter-spacing:-0.280px;left:2139.2px;transform:translateX(-50%);">-</span>
<span class="t" style="top:415.8px;font-size:13.3px;color:#000;font-weight:700;letter-spacing:-0.280px;left:2238.2px;transform:translateX(-50%);">-</span>
<span class="t" style="top:434.8px;font-size:13.3px;color:#000;font-weight:700;letter-spacing:-0.280px;left:28.5px;">Cash Flow</span>
<span class="t" style="top:434.8px;font-size:13.3px;color:#000;font-weight:700;letter-spacing:-0.280px;left:253.4px;transform:translateX(-50%);">($10,946,606)</span>
<span class="t" style="top:434.8px;font-size:13.3px;color:#000;font-weight:700;letter-spacing:-0.280px;left:357.2px;transform:translateX(-50%);">$240,865</span>
<span class="t" style="top:434.8px;font-size:13.3px;color:#000;font-weight:700;letter-spacing:-0.280px;left:456.2px;transform:translateX(-50%);">$1,575,880</span>
<span class="t" style="top:434.8px;font-size:13.3px;color:#000;font-weight:700;letter-spacing:-0.280px;left:555.2px;transform:translateX(-50%);">$1,609,688</span>
<span class="t" style="top:434.8px;font-size:13.3px;color:#000;font-weight:700;letter-spacing:-0.280px;left:654.2px;transform:translateX(-50%);">$1,635,494</span>
<span class="t" style="top:434.8px;font-size:13.3px;color:#000;font-weight:700;letter-spacing:-0.280px;left:753.2px;transform:translateX(-50%);">$1,661,613</span>
<span class="t" style="top:434.8px;font-size:13.3px;color:#000;font-weight:700;letter-spacing:-0.280px;left:852.2px;transform:translateX(-50%);">$1,688,045</span>
<span class="t" style="top:434.8px;font-size:13.3px;color:#000;font-weight:700;letter-spacing:-0.280px;left:951.2px;transform:translateX(-50%);">$1,714,794</span>
<span class="t" style="top:434.8px;font-size:13.3px;color:#000;font-weight:700;letter-spacing:-0.280px;left:1050.2px;transform:translateX(-50%);">$1,554,329</span>
<span class="t" style="top:434.8px;font-size:13.3px;color:#000;font-weight:700;letter-spacing:-0.280px;left:1149.2px;transform:translateX(-50%);">$1,307,883</span>
<span class="t" style="top:434.8px;font-size:13.3px;color:#000;font-weight:700;letter-spacing:-0.280px;left:1248.2px;transform:translateX(-50%);">$1,327,289</span>
<span class="t" style="top:434.8px;font-size:13.3px;color:#000;font-weight:700;letter-spacing:-0.280px;left:1347.2px;transform:translateX(-50%);">$1,346,838</span>
<span class="t" style="top:434.8px;font-size:13.3px;color:#000;font-weight:700;letter-spacing:-0.280px;left:1446.2px;transform:translateX(-50%);">$1,366,525</span>
<span class="t" style="top:434.8px;font-size:13.3px;color:#000;font-weight:700;letter-spacing:-0.280px;left:1545.2px;transform:translateX(-50%);">$1,386,343</span>
<span class="t" style="top:434.8px;font-size:13.3px;color:#000;font-weight:700;letter-spacing:-0.280px;left:1644.2px;transform:translateX(-50%);">$1,406,287</span>
<span class="t" style="top:434.8px;font-size:13.3px;color:#000;font-weight:700;letter-spacing:-0.280px;left:1743.2px;transform:translateX(-50%);">$1,426,347</span>
<span class="t" style="top:434.8px;font-size:13.3px;color:#000;font-weight:700;letter-spacing:-0.280px;left:1842.2px;transform:translateX(-50%);">$1,446,517</span>
<span class="t" style="top:434.8px;font-size:13.3px;color:#000;font-weight:700;letter-spacing:-0.280px;left:1941.2px;transform:translateX(-50%);">$1,466,786</span>
<span class="t" style="top:434.8px;font-size:13.3px;color:#000;font-weight:700;letter-spacing:-0.280px;left:2040.2px;transform:translateX(-50%);">$1,487,145</span>
<span class="t" style="top:434.8px;font-size:13.3px;color:#000;font-weight:700;letter-spacing:-0.280px;left:2139.2px;transform:translateX(-50%);">$1,507,584</span>
<span class="t" style="top:434.8px;font-size:13.3px;color:#000;font-weight:700;letter-spacing:-0.280px;left:2238.2px;transform:translateX(-50%);">$9,849,518</span>
<span class="t" style="top:474.8px;font-size:13.3px;color:#000;font-weight:700;letter-spacing:-0.280px;left:28.5px;">IRR</span>
<span class="t" style="top:474.8px;font-size:13.3px;color:#000;font-weight:700;letter-spacing:-0.280px;left:251.2px;transform:translateX(-50%);">12.3%</span>
<span class="t" style="top:493.8px;font-size:13.3px;color:#000;letter-spacing:-0.300px;left:28.5px;">Project DCF</span>
<span class="t" style="top:493.8px;font-size:13.3px;color:#0000ff;letter-spacing:-0.300px;left:251.2px;transform:translateX(-50%);">10.00%</span>
<span class="t" style="top:493.8px;font-size:13.3px;color:#000;letter-spacing:-0.300px;left:357.2px;transform:translateX(-50%);">$218,968</span>
<span class="t" style="top:493.8px;font-size:13.3px;color:#000;letter-spacing:-0.300px;left:456.2px;transform:translateX(-50%);">$1,302,380</span>
<span class="t" style="top:493.8px;font-size:13.3px;color:#000;letter-spacing:-0.300px;left:555.2px;transform:translateX(-50%);">$1,209,383</span>
<span class="t" style="top:493.8px;font-size:13.3px;color:#000;letter-spacing:-0.300px;left:654.2px;transform:translateX(-50%);">$1,117,065</span>
<span class="t" style="top:493.8px;font-size:13.3px;color:#000;letter-spacing:-0.300px;left:753.2px;transform:translateX(-50%);">$1,031,731</span>
<span class="t" style="top:493.8px;font-size:13.3px;color:#000;letter-spacing:-0.300px;left:852.2px;transform:translateX(-50%);">$952,857</span>
<span class="t" style="top:493.8px;font-size:13.3px;color:#000;letter-spacing:-0.300px;left:951.2px;transform:translateX(-50%);">$879,960</span>
<span class="t" style="top:493.8px;font-size:13.3px;color:#000;letter-spacing:-0.300px;left:1050.2px;transform:translateX(-50%);">$725,106</span>
<span class="t" style="top:493.8px;font-size:13.3px;color:#000;letter-spacing:-0.300px;left:1149.2px;transform:translateX(-50%);">$554,670</span>
<span class="t" style="top:493.8px;font-size:13.3px;color:#000;letter-spacing:-0.300px;left:1248.2px;transform:translateX(-50%);">$511,727</span>
<span class="t" style="top:493.8px;font-size:13.3px;color:#000;letter-spacing:-0.300px;left:1347.2px;transform:translateX(-50%);">$472,058</span>
<span class="t" style="top:493.8px;font-size:13.3px;color:#000;letter-spacing:-0.300px;left:1446.2px;transform:translateX(-50%);">$435,417</span>
<span class="t" style="top:493.8px;font-size:13.3px;color:#000;letter-spacing:-0.300px;left:1545.2px;transform:translateX(-50%);">$401,574</span>
<span class="t" style="top:493.8px;font-size:13.3px;color:#000;letter-spacing:-0.300px;left:1644.2px;transform:translateX(-50%);">$370,319</span>
<span class="t" style="top:493.8px;font-size:13.3px;color:#000;letter-spacing:-0.300px;left:1743.2px;transform:translateX(-50%);">$341,456</span>
<span class="t" style="top:493.8px;font-size:13.3px;color:#000;letter-spacing:-0.300px;left:1842.2px;transform:translateX(-50%);">$314,804</span>
<span class="t" style="top:493.8px;font-size:13.3px;color:#000;letter-spacing:-0.300px;left:1941.2px;transform:translateX(-50%);">$290,196</span>
<span class="t" style="top:493.8px;font-size:13.3px;color:#000;letter-spacing:-0.300px;left:2040.2px;transform:translateX(-50%);">$267,476</span>
<span class="t" style="top:493.8px;font-size:13.3px;color:#000;letter-spacing:-0.300px;left:2139.2px;transform:translateX(-50%);">$246,502</span>
<span class="t" style="top:493.8px;font-size:13.3px;color:#000;letter-spacing:-0.300px;left:2238.2px;transform:translateX(-50%);">$1,464,068</span>
<span class="t" style="top:512.8px;font-size:13.3px;color:#000;letter-spacing:-0.300px;left:28.5px;">Project NPV</span>
<span class="t" style="top:512.8px;font-size:13.3px;color:#000;letter-spacing:-0.300px;left:251.2px;transform:translateX(-50%);">$2,161,114</span>
<span class="t" style="top:531.8px;font-size:13.3px;color:#000;letter-spacing:-0.300px;left:28.5px;">Project PV</span>
<span class="t" style="top:531.8px;font-size:13.3px;color:#000;letter-spacing:-0.300px;left:251.2px;transform:translateX(-50%);">$13,107,719</span>
<span class="t" style="top:569.8px;font-size:13.3px;color:#000;font-weight:700;letter-spacing:-0.280px;left:28.5px;">Investor Cash Flow</span>
<span class="t" style="top:569.8px;font-size:13.3px;color:#000;font-weight:700;letter-spacing:-0.280px;left:253.4px;transform:translateX(-50%);">($9,946,606)</span>
<span class="t" style="top:569.8px;font-size:13.3px;color:#000;font-weight:700;letter-spacing:-0.280px;left:357.2px;transform:translateX(-50%);">$228,822</span>
<span class="t" style="top:569.8px;font-size:13.3px;color:#000;font-weight:700;letter-spacing:-0.280px;left:456.2px;transform:translateX(-50%);">$1,497,086</span>
<span class="t" style="top:569.8px;font-size:13.3px;color:#000;font-weight:700;letter-spacing:-0.280px;left:555.2px;transform:translateX(-50%);">$1,529,204</span>
<span class="t" style="top:569.8px;font-size:13.3px;color:#000;font-weight:700;letter-spacing:-0.280px;left:654.2px;transform:translateX(-50%);">$1,553,720</span>
<span class="t" style="top:569.8px;font-size:13.3px;color:#000;font-weight:700;letter-spacing:-0.280px;left:753.2px;transform:translateX(-50%);">$1,578,532</span>
<span class="t" style="top:569.8px;font-size:13.3px;color:#000;font-weight:700;letter-spacing:-0.280px;left:852.2px;transform:translateX(-50%);">$1,603,643</span>
<span class="t" style="top:569.8px;font-size:13.3px;color:#000;font-weight:700;letter-spacing:-0.280px;left:951.2px;transform:translateX(-50%);">$1,629,054</span>
<span class="t" style="top:569.8px;font-size:13.3px;color:#000;font-weight:700;letter-spacing:-0.280px;left:1050.2px;transform:translateX(-50%);">$1,476,613</span>
<span class="t" style="top:569.8px;font-size:13.3px;color:#000;font-weight:700;letter-spacing:-0.280px;left:1149.2px;transform:translateX(-50%);">$1,242,489</span>
<span class="t" style="top:569.8px;font-size:13.3px;color:#000;font-weight:700;letter-spacing:-0.280px;left:1248.2px;transform:translateX(-50%);">$1,260,924</span>
<span class="t" style="top:569.8px;font-size:13.3px;color:#000;font-weight:700;letter-spacing:-0.280px;left:1347.2px;transform:translateX(-50%);">$1,279,496</span>
<span class="t" style="top:569.8px;font-size:13.3px;color:#000;font-weight:700;letter-spacing:-0.280px;left:1446.2px;transform:translateX(-50%);">$1,298,199</span>
<span class="t" style="top:569.8px;font-size:13.3px;color:#000;font-weight:700;letter-spacing:-0.280px;left:1545.2px;transform:translateX(-50%);">$1,317,026</span>
<span class="t" style="top:569.8px;font-size:13.3px;color:#000;font-weight:700;letter-spacing:-0.280px;left:1644.2px;transform:translateX(-50%);">$1,335,972</span>
<span class="t" style="top:569.8px;font-size:13.3px;color:#000;font-weight:700;letter-spacing:-0.280px;left:1743.2px;transform:translateX(-50%);">$1,355,030</span>
<span class="t" style="top:569.8px;font-size:13.3px;color:#000;font-weight:700;letter-spacing:-0.280px;left:1842.2px;transform:translateX(-50%);">$1,374,191</span>
<span class="t" style="top:569.8px;font-size:13.3px;color:#000;font-weight:700;letter-spacing:-0.280px;left:1941.2px;transform:translateX(-50%);">$1,393,447</span>
<span class="t" style="top:569.8px;font-size:13.3px;color:#000;font-weight:700;letter-spacing:-0.280px;left:2040.2px;transform:translateX(-50%);">$1,412,788</span>
<span class="t" style="top:569.8px;font-size:13.3px;color:#000;font-weight:700;letter-spacing:-0.280px;left:2139.2px;transform:translateX(-50%);">$1,432,205</span>
<span class="t" style="top:569.8px;font-size:13.3px;color:#000;font-weight:700;letter-spacing:-0.280px;left:2238.2px;transform:translateX(-50%);">$9,357,042</span>
<span class="t" style="top:588.8px;font-size:13.3px;color:#000;letter-spacing:-0.300px;left:28.5px;text-decoration:underline;text-underline-offset:2px;">95%</span>
<span class="t" style="top:607.8px;font-size:13.3px;color:#000;letter-spacing:-0.300px;left:28.5px;">Investor IRR</span>
<span class="t" style="top:607.8px;font-size:13.3px;color:#000;font-weight:700;letter-spacing:-0.280px;left:251.2px;transform:translateX(-50%);text-decoration:underline;text-underline-offset:2px;">12.9%</span>
<span class="t" style="top:645.8px;font-size:13.3px;color:#000;letter-spacing:-0.300px;left:28.5px;">Investor DCF</span>
<span class="t" style="top:645.8px;font-size:13.3px;color:#0000ff;letter-spacing:-0.300px;left:251.2px;transform:translateX(-50%);">10.00%</span>
<span class="t" style="top:645.8px;font-size:13.3px;color:#000;letter-spacing:-0.300px;left:357.2px;transform:translateX(-50%);">$208,020</span>
<span class="t" style="top:645.8px;font-size:13.3px;color:#000;letter-spacing:-0.300px;left:456.2px;transform:translateX(-50%);">$1,237,261</span>
<span class="t" style="top:645.8px;font-size:13.3px;color:#000;letter-spacing:-0.300px;left:555.2px;transform:translateX(-50%);">$1,148,913</span>
<span class="t" style="top:645.8px;font-size:13.3px;color:#000;letter-spacing:-0.300px;left:654.2px;transform:translateX(-50%);">$1,061,211</span>
<span class="t" style="top:645.8px;font-size:13.3px;color:#000;letter-spacing:-0.300px;left:753.2px;transform:translateX(-50%);">$980,144</span>
<span class="t" style="top:645.8px;font-size:13.3px;color:#000;letter-spacing:-0.300px;left:852.2px;transform:translateX(-50%);">$905,215</span>
<span class="t" style="top:645.8px;font-size:13.3px;color:#000;letter-spacing:-0.300px;left:951.2px;transform:translateX(-50%);">$835,962</span>
<span class="t" style="top:645.8px;font-size:13.3px;color:#000;letter-spacing:-0.300px;left:1050.2px;transform:translateX(-50%);">$688,851</span>
<span class="t" style="top:645.8px;font-size:13.3px;color:#000;letter-spacing:-0.300px;left:1149.2px;transform:translateX(-50%);">$526,937</span>
<span class="t" style="top:645.8px;font-size:13.3px;color:#000;letter-spacing:-0.300px;left:1248.2px;transform:translateX(-50%);">$486,141</span>
<span class="t" style="top:645.8px;font-size:13.3px;color:#000;letter-spacing:-0.300px;left:1347.2px;transform:translateX(-50%);">$448,456</span>
<span class="t" style="top:645.8px;font-size:13.3px;color:#000;letter-spacing:-0.300px;left:1446.2px;transform:translateX(-50%);">$413,646</span>
<span class="t" style="top:645.8px;font-size:13.3px;color:#000;letter-spacing:-0.300px;left:1545.2px;transform:translateX(-50%);">$381,496</span>
<span class="t" style="top:645.8px;font-size:13.3px;color:#000;letter-spacing:-0.300px;left:1644.2px;transform:translateX(-50%);">$351,803</span>
<span class="t" style="top:645.8px;font-size:13.3px;color:#000;letter-spacing:-0.300px;left:1743.2px;transform:translateX(-50%);">$324,383</span>
<span class="t" style="top:645.8px;font-size:13.3px;color:#000;letter-spacing:-0.300px;left:1842.2px;transform:translateX(-50%);">$299,064</span>
<span class="t" style="top:645.8px;font-size:13.3px;color:#000;letter-spacing:-0.300px;left:1941.2px;transform:translateX(-50%);">$275,686</span>
<span class="t" style="top:645.8px;font-size:13.3px;color:#000;letter-spacing:-0.300px;left:2040.2px;transform:translateX(-50%);">$254,102</span>
<span class="t" style="top:645.8px;font-size:13.3px;color:#000;letter-spacing:-0.300px;left:2139.2px;transform:translateX(-50%);">$234,177</span>
<span class="t" style="top:645.8px;font-size:13.3px;color:#000;letter-spacing:-0.300px;left:2238.2px;transform:translateX(-50%);">$1,390,865</span>
<span class="t" style="top:664.8px;font-size:13.3px;color:#000;letter-spacing:-0.300px;left:28.5px;">Investor NPV</span>
<span class="t" style="top:664.8px;font-size:13.3px;color:#000;letter-spacing:-0.300px;left:251.2px;transform:translateX(-50%);">$2,505,728</span>
<span class="t" style="top:721.8px;font-size:13.3px;color:#000;font-weight:700;letter-spacing:-0.280px;left:28.5px;">Owner Cash Flow</span>
<span class="t" style="top:721.8px;font-size:13.3px;color:#000;font-weight:700;letter-spacing:-0.280px;left:253.4px;transform:translateX(-50%);">($1,000,000)</span>
<span class="t" style="top:721.8px;font-size:13.3px;color:#000;font-weight:700;letter-spacing:-0.280px;left:357.2px;transform:translateX(-50%);">$12,043</span>
<span class="t" style="top:721.8px;font-size:13.3px;color:#000;font-weight:700;letter-spacing:-0.280px;left:456.2px;transform:translateX(-50%);">$78,794</span>
<span class="t" style="top:721.8px;font-size:13.3px;color:#000;font-weight:700;letter-spacing:-0.280px;left:555.2px;transform:translateX(-50%);">$80,484</span>
<span class="t" style="top:721.8px;font-size:13.3px;color:#000;font-weight:700;letter-spacing:-0.280px;left:654.2px;transform:translateX(-50%);">$81,775</span>
<span class="t" style="top:721.8px;font-size:13.3px;color:#000;font-weight:700;letter-spacing:-0.280px;left:753.2px;transform:translateX(-50%);">$83,081</span>
<span class="t" style="top:721.8px;font-size:13.3px;color:#000;font-weight:700;letter-spacing:-0.280px;left:852.2px;transform:translateX(-50%);">$84,402</span>
<span class="t" style="top:721.8px;font-size:13.3px;color:#000;font-weight:700;letter-spacing:-0.280px;left:951.2px;transform:translateX(-50%);">$85,740</span>
<span class="t" style="top:721.8px;font-size:13.3px;color:#000;font-weight:700;letter-spacing:-0.280px;left:1050.2px;transform:translateX(-50%);">$77,716</span>
<span class="t" style="top:721.8px;font-size:13.3px;color:#000;font-weight:700;letter-spacing:-0.280px;left:1149.2px;transform:translateX(-50%);">$65,394</span>
<span class="t" style="top:721.8px;font-size:13.3px;color:#000;font-weight:700;letter-spacing:-0.280px;left:1248.2px;transform:translateX(-50%);">$66,364</span>
<span class="t" style="top:721.8px;font-size:13.3px;color:#000;font-weight:700;letter-spacing:-0.280px;left:1347.2px;transform:translateX(-50%);">$67,342</span>
<span class="t" style="top:721.8px;font-size:13.3px;color:#000;font-weight:700;letter-spacing:-0.280px;left:1446.2px;transform:translateX(-50%);">$68,326</span>
<span class="t" style="top:721.8px;font-size:13.3px;color:#000;font-weight:700;letter-spacing:-0.280px;left:1545.2px;transform:translateX(-50%);">$69,317</span>
<span class="t" style="top:721.8px;font-size:13.3px;color:#000;font-weight:700;letter-spacing:-0.280px;left:1644.2px;transform:translateX(-50%);">$70,314</span>
<span class="t" style="top:721.8px;font-size:13.3px;color:#000;font-weight:700;letter-spacing:-0.280px;left:1743.2px;transform:translateX(-50%);">$71,317</span>
<span class="t" style="top:721.8px;font-size:13.3px;color:#000;font-weight:700;letter-spacing:-0.280px;left:1842.2px;transform:translateX(-50%);">$72,326</span>
<span class="t" style="top:721.8px;font-size:13.3px;color:#000;font-weight:700;letter-spacing:-0.280px;left:1941.2px;transform:translateX(-50%);">$73,339</span>
<span class="t" style="top:721.8px;font-size:13.3px;color:#000;font-weight:700;letter-spacing:-0.280px;left:2040.2px;transform:translateX(-50%);">$74,357</span>
<span class="t" style="top:721.8px;font-size:13.3px;color:#000;font-weight:700;letter-spacing:-0.280px;left:2139.2px;transform:translateX(-50%);">$75,379</span>
<span class="t" style="top:721.8px;font-size:13.3px;color:#000;font-weight:700;letter-spacing:-0.280px;left:2238.2px;transform:translateX(-50%);">$492,476</span>
<span class="t" style="top:740.8px;font-size:13.3px;color:#000;letter-spacing:-0.300px;left:28.5px;text-decoration:underline;text-underline-offset:2px;">5%</span>
<span class="t" style="top:759.8px;font-size:13.3px;color:#000;letter-spacing:-0.300px;left:28.5px;">Owner IRR</span>
<span class="t" style="top:759.8px;font-size:13.3px;color:#000;font-weight:700;letter-spacing:-0.280px;left:251.2px;transform:translateX(-50%);text-decoration:underline;text-underline-offset:2px;">5.4%</span>
<span class="t" style="top:797.8px;font-size:13.3px;color:#000;letter-spacing:-0.300px;left:28.5px;">Owner DCF</span>
<span class="t" style="top:797.8px;font-size:13.3px;color:#0000ff;letter-spacing:-0.300px;left:251.2px;transform:translateX(-50%);">10.00%</span>
<span class="t" style="top:797.8px;font-size:13.3px;color:#000;letter-spacing:-0.300px;left:357.2px;transform:translateX(-50%);">$10,948</span>
<span class="t" style="top:797.8px;font-size:13.3px;color:#000;letter-spacing:-0.300px;left:456.2px;transform:translateX(-50%);">$65,119</span>
<span class="t" style="top:797.8px;font-size:13.3px;color:#000;letter-spacing:-0.300px;left:555.2px;transform:translateX(-50%);">$60,469</span>
<span class="t" style="top:797.8px;font-size:13.3px;color:#000;letter-spacing:-0.300px;left:654.2px;transform:translateX(-50%);">$55,853</span>
<span class="t" style="top:797.8px;font-size:13.3px;color:#000;letter-spacing:-0.300px;left:753.2px;transform:translateX(-50%);">$51,587</span>
<span class="t" style="top:797.8px;font-size:13.3px;color:#000;letter-spacing:-0.300px;left:852.2px;transform:translateX(-50%);">$47,643</span>
<span class="t" style="top:797.8px;font-size:13.3px;color:#000;letter-spacing:-0.300px;left:951.2px;transform:translateX(-50%);">$43,998</span>
<span class="t" style="top:797.8px;font-size:13.3px;color:#000;letter-spacing:-0.300px;left:1050.2px;transform:translateX(-50%);">$36,255</span>
<span class="t" style="top:797.8px;font-size:13.3px;color:#000;letter-spacing:-0.300px;left:1149.2px;transform:translateX(-50%);">$27,734</span>
<span class="t" style="top:797.8px;font-size:13.3px;color:#000;letter-spacing:-0.300px;left:1248.2px;transform:translateX(-50%);">$25,586</span>
<span class="t" style="top:797.8px;font-size:13.3px;color:#000;letter-spacing:-0.300px;left:1347.2px;transform:translateX(-50%);">$23,603</span>
<span class="t" style="top:797.8px;font-size:13.3px;color:#000;letter-spacing:-0.300px;left:1446.2px;transform:translateX(-50%);">$21,771</span>
<span class="t" style="top:797.8px;font-size:13.3px;color:#000;letter-spacing:-0.300px;left:1545.2px;transform:translateX(-50%);">$20,079</span>
<span class="t" style="top:797.8px;font-size:13.3px;color:#000;letter-spacing:-0.300px;left:1644.2px;transform:translateX(-50%);">$18,516</span>
<span class="t" style="top:797.8px;font-size:13.3px;color:#000;letter-spacing:-0.300px;left:1743.2px;transform:translateX(-50%);">$17,073</span>
<span class="t" style="top:797.8px;font-size:13.3px;color:#000;letter-spacing:-0.300px;left:1842.2px;transform:translateX(-50%);">$15,740</span>
<span class="t" style="top:797.8px;font-size:13.3px;color:#000;letter-spacing:-0.300px;left:1941.2px;transform:translateX(-50%);">$14,510</span>
<span class="t" style="top:797.8px;font-size:13.3px;color:#000;letter-spacing:-0.300px;left:2040.2px;transform:translateX(-50%);">$13,374</span>
<span class="t" style="top:797.8px;font-size:13.3px;color:#000;letter-spacing:-0.300px;left:2139.2px;transform:translateX(-50%);">$12,325</span>
<span class="t" style="top:797.8px;font-size:13.3px;color:#000;letter-spacing:-0.300px;left:2238.2px;transform:translateX(-50%);">$73,203</span>
<span class="t" style="top:816.8px;font-size:13.3px;color:#000;letter-spacing:-0.300px;left:28.5px;">Owner NPV</span>
<span class="t" style="top:816.8px;font-size:13.3px;color:#000;letter-spacing:-0.300px;left:253.4px;transform:translateX(-50%);">($344,614)</span>
<span class="t" style="top:873.8px;font-size:13.3px;color:#000;letter-spacing:-0.300px;left:28.5px;">Check</span>
<span class="t" style="top:873.8px;font-size:13.3px;color:#000;letter-spacing:-0.300px;right:2261px;">-</span>
<span class="t" style="top:873.8px;font-size:13.3px;color:#000;letter-spacing:-0.300px;right:2162px;">-</span>
<span class="t" style="top:873.8px;font-size:13.3px;color:#000;letter-spacing:-0.300px;right:2063px;">-</span>
<span class="t" style="top:873.8px;font-size:13.3px;color:#000;letter-spacing:-0.300px;right:1964px;">-</span>
<span class="t" style="top:873.8px;font-size:13.3px;color:#000;letter-spacing:-0.300px;right:1865px;">-</span>
<span class="t" style="top:873.8px;font-size:13.3px;color:#000;letter-spacing:-0.300px;right:1766px;">-</span>
<span class="t" style="top:873.8px;font-size:13.3px;color:#000;letter-spacing:-0.300px;right:1667px;">-</span>
<span class="t" style="top:873.8px;font-size:13.3px;color:#000;letter-spacing:-0.300px;right:1568px;">-</span>
<span class="t" style="top:873.8px;font-size:13.3px;color:#000;letter-spacing:-0.300px;right:1469px;">-</span>
<span class="t" style="top:873.8px;font-size:13.3px;color:#000;letter-spacing:-0.300px;right:1370px;">-</span>
<span class="t" style="top:873.8px;font-size:13.3px;color:#000;letter-spacing:-0.300px;right:1271px;">-</span>
<span class="t" style="top:873.8px;font-size:13.3px;color:#000;letter-spacing:-0.300px;right:1172px;">-</span>
<span class="t" style="top:873.8px;font-size:13.3px;color:#000;letter-spacing:-0.300px;right:1073px;">-</span>
<span class="t" style="top:873.8px;font-size:13.3px;color:#000;letter-spacing:-0.300px;right:974px;">-</span>
<span class="t" style="top:873.8px;font-size:13.3px;color:#000;letter-spacing:-0.300px;right:875px;">-</span>
<span class="t" style="top:873.8px;font-size:13.3px;color:#000;letter-spacing:-0.300px;right:776px;">-</span>
<span class="t" style="top:873.8px;font-size:13.3px;color:#000;letter-spacing:-0.300px;right:677px;">-</span>
<span class="t" style="top:873.8px;font-size:13.3px;color:#000;letter-spacing:-0.300px;right:578px;">-</span>
<span class="t" style="top:873.8px;font-size:13.3px;color:#000;letter-spacing:-0.300px;right:479px;">-</span>
<span class="t" style="top:873.8px;font-size:13.3px;color:#000;letter-spacing:-0.300px;right:380px;">-</span>
<span class="t" style="top:873.8px;font-size:13.3px;color:#000;letter-spacing:-0.300px;right:281px;">-</span>
<svg class="a" style="left:186px;top:899px;overflow:hidden;" width="1075" height="414" viewBox="0 0 1075 414"><rect x="0.5" y="0.5" width="1074" height="419" fill="#e2efda" stroke="#000" stroke-width="1"/><rect x="90" y="366.20" width="969.5" height="1.1" fill="#d5d9d3"/><rect x="90" y="303.35" width="969.5" height="1.1" fill="#d5d9d3"/><rect x="90" y="240.50" width="969.5" height="1.1" fill="#d5d9d3"/><rect x="90" y="177.65" width="969.5" height="1.1" fill="#d5d9d3"/><rect x="90" y="114.80" width="969.5" height="1.1" fill="#d5d9d3"/><rect x="90" y="51.95" width="969.5" height="1.1" fill="#d5d9d3"/><rect x="101.78" y="241.50" width="10.6" height="124.03" fill="#595959" stroke="#1a1a1a" stroke-width="1"/><rect x="114.58" y="241.50" width="10.6" height="11.57" fill="#9dc3e6" stroke="#1a1a1a" stroke-width="1"/><rect x="147.95" y="238.62" width="10.6" height="1.88" fill="#595959" stroke="#1a1a1a" stroke-width="1"/><rect x="160.25" y="239.80" width="11.4" height="1.2" fill="#262626"/><rect x="194.12" y="222.68" width="10.6" height="17.82" fill="#595959" stroke="#1a1a1a" stroke-width="1"/><rect x="206.42" y="239.80" width="11.4" height="1.2" fill="#262626"/><rect x="240.28" y="222.28" width="10.6" height="18.22" fill="#595959" stroke="#1a1a1a" stroke-width="1"/><rect x="252.58" y="239.80" width="11.4" height="1.2" fill="#262626"/><rect x="286.45" y="221.97" width="10.6" height="18.53" fill="#595959" stroke="#1a1a1a" stroke-width="1"/><rect x="298.75" y="239.80" width="11.4" height="1.2" fill="#262626"/><rect x="332.62" y="221.66" width="10.6" height="18.84" fill="#595959" stroke="#1a1a1a" stroke-width="1"/><rect x="344.92" y="239.80" width="11.4" height="1.2" fill="#262626"/><rect x="378.78" y="221.34" width="10.6" height="19.16" fill="#595959" stroke="#1a1a1a" stroke-width="1"/><rect x="391.08" y="239.80" width="11.4" height="1.2" fill="#262626"/><rect x="424.95" y="221.02" width="10.6" height="19.48" fill="#595959" stroke="#1a1a1a" stroke-width="1"/><rect x="437.25" y="239.80" width="11.4" height="1.2" fill="#262626"/><rect x="471.12" y="222.94" width="10.6" height="17.56" fill="#595959" stroke="#1a1a1a" stroke-width="1"/><rect x="483.42" y="239.80" width="11.4" height="1.2" fill="#262626"/><rect x="517.28" y="225.88" width="10.6" height="14.62" fill="#595959" stroke="#1a1a1a" stroke-width="1"/><rect x="529.58" y="239.80" width="11.4" height="1.2" fill="#262626"/><rect x="563.45" y="225.65" width="10.6" height="14.85" fill="#595959" stroke="#1a1a1a" stroke-width="1"/><rect x="575.75" y="239.80" width="11.4" height="1.2" fill="#262626"/><rect x="609.62" y="225.42" width="10.6" height="15.08" fill="#595959" stroke="#1a1a1a" stroke-width="1"/><rect x="621.92" y="239.80" width="11.4" height="1.2" fill="#262626"/><rect x="655.78" y="225.18" width="10.6" height="15.32" fill="#595959" stroke="#1a1a1a" stroke-width="1"/><rect x="668.08" y="239.80" width="11.4" height="1.2" fill="#262626"/><rect x="701.95" y="224.94" width="10.6" height="15.56" fill="#595959" stroke="#1a1a1a" stroke-width="1"/><rect x="714.25" y="239.80" width="11.4" height="1.2" fill="#262626"/><rect x="748.12" y="224.71" width="10.6" height="15.79" fill="#595959" stroke="#1a1a1a" stroke-width="1"/><rect x="760.42" y="239.80" width="11.4" height="1.2" fill="#262626"/><rect x="794.28" y="224.47" width="10.6" height="16.03" fill="#595959" stroke="#1a1a1a" stroke-width="1"/><rect x="806.58" y="239.80" width="11.4" height="1.2" fill="#262626"/><rect x="840.45" y="224.23" width="10.6" height="16.27" fill="#595959" stroke="#1a1a1a" stroke-width="1"/><rect x="852.75" y="239.80" width="11.4" height="1.2" fill="#262626"/><rect x="886.62" y="223.98" width="10.6" height="16.52" fill="#595959" stroke="#1a1a1a" stroke-width="1"/><rect x="898.92" y="239.80" width="11.4" height="1.2" fill="#262626"/><rect x="932.78" y="223.74" width="10.6" height="16.76" fill="#595959" stroke="#1a1a1a" stroke-width="1"/><rect x="945.08" y="239.80" width="11.4" height="1.2" fill="#262626"/><rect x="978.95" y="223.50" width="10.6" height="17.00" fill="#595959" stroke="#1a1a1a" stroke-width="1"/><rect x="991.25" y="239.80" width="11.4" height="1.2" fill="#262626"/><rect x="1025.12" y="123.88" width="10.6" height="116.62" fill="#595959" stroke="#1a1a1a" stroke-width="1"/><rect x="1037.92" y="235.31" width="10.6" height="5.19" fill="#9dc3e6" stroke="#1a1a1a" stroke-width="1"/></svg>
<span class="t" style="top:912.0px;font-size:17.2px;color:#595959;font-weight:700;letter-spacing:0.516px;left:722.5px;transform:translateX(-50%);">Cash Flow (Investor vs Owner/Operator)</span>
<span class="t" style="top:941.2px;font-size:11.2px;color:#595959;letter-spacing:-0.200px;right:2297.5px;">$15,000,000</span>
<span class="t" style="top:1004.0px;font-size:11.2px;color:#595959;letter-spacing:-0.200px;right:2297.5px;">$10,000,000</span>
<span class="t" style="top:1066.9px;font-size:11.2px;color:#595959;letter-spacing:-0.200px;right:2297.5px;">$5,000,000</span>
<span class="t" style="top:1128.5px;font-size:11.2px;color:#595959;letter-spacing:-0.200px;right:2297.5px;">-</span>
<span class="t" style="top:1192.5px;font-size:11.2px;color:#595959;letter-spacing:-0.200px;right:2294.5px;">($5,000,000)</span>
<span class="t" style="top:1255.4px;font-size:11.2px;color:#595959;letter-spacing:-0.200px;right:2294.5px;">($10,000,000)</span>
<svg class="a" style="left:19.5px;top:19.5px;" width="21" height="21" viewBox="0 0 21 21">
<rect x="5.5" y="1" width="14.5" height="19" rx="1.5" fill="#185c37"/>
<path d="M7 1 H12.75 V5.75 H5.5 V2.5 A1.5 1.5 0 0 1 7 1Z" fill="#21a366"/>
<path d="M12.75 1 H18.5 A1.5 1.5 0 0 1 20 2.5 V5.75 H12.75Z" fill="#33c481"/>
<rect x="5.5" y="5.75" width="7.25" height="4.75" fill="#107c41"/>
<rect x="12.75" y="5.75" width="7.25" height="4.75" fill="#21a366"/>
<rect x="12.75" y="10.5" width="7.25" height="4.75" fill="#107c41"/>
<rect x="0.5" y="5" width="11.5" height="11.5" rx="1.2" fill="#107c41"/>
<path d="M3.6 7.6 L8.9 13.9 M8.9 7.6 L3.6 13.9" stroke="#fff" stroke-width="1.7"/></svg>
<span class="t" style="top:20.5px;font-size:13.6px;color:#a6a6a6;letter-spacing:-0.408px;left:61px;transform:scaleX(0.9589);transform-origin:0 50%;">AutoSave</span>
<div class="a" style="left:123.5px;top:17px;width:53px;height:25px;border:1px solid #9c9c9c;border-radius:13px;background:#fdfdfd"></div>
<div class="a" style="left:126.5px;top:21.5px;width:17.5px;height:17.5px;background:#b9b9b9;border-radius:50%;"></div>
<span class="t" style="top:20.5px;font-size:14px;color:#a6a6a6;letter-spacing:-0.420px;left:151.5px;transform:scaleX(0.9906);transform-origin:0 50%;">Off</span>
<svg class="a" style="left:193px;top:19.5px;" width="21" height="21" viewBox="0 0 21 21"><path d="M1 3 a2 2 0 0 1 2-2 H15.5 L20 5.5 V18 a2 2 0 0 1-2 2 H3 a2 2 0 0 1-2-2Z M5.5 1 V6.5 H14.5 V1 M4.5 20 V12.5 H16.5 V20" fill="none" stroke="#a6a6a6" stroke-width="1.5"/></svg>
<svg class="a" style="left:228px;top:19px;" width="20" height="22" viewBox="0 0 20 22"><path d="M2 2.5 V9.5 H9 M2.3 9.2 C5 5.2 9 3.6 12.5 5 C17 6.8 18.5 11.5 16 15 L10 21" fill="none" stroke="#a6a6a6" stroke-width="1.5" stroke-linecap="round" stroke-linejoin="round"/></svg>
<svg class="a" style="left:255.5px;top:27.0px;" width="9" height="6" viewBox="0 0 9 6"><path d="M1 1 L4.5 4.5 L8 1" fill="none" stroke="#a6a6a6" stroke-width="1.4" stroke-linecap="round" stroke-linejoin="round"/></svg>
<svg class="a" style="left:276.5px;top:19px;" width="20" height="22" viewBox="0 0 20 22"><path d="M18 2.5 V9.5 H11 M17.7 9.2 C15 5.2 11 3.6 7.5 5 C3 6.8 1.5 11.5 4 15 L10 21" fill="none" stroke="#a6a6a6" stroke-width="1.5" stroke-linecap="round" stroke-linejoin="round"/></svg>
<svg class="a" style="left:303.0px;top:27.0px;" width="9" height="6" viewBox="0 0 9 6"><path d="M1 1 L4.5 4.5 L8 1" fill="none" stroke="#a6a6a6" stroke-width="1.4" stroke-linecap="round" stroke-linejoin="round"/></svg>
<svg class="a" style="left:328.5px;top:25.5px;" width="10" height="10" viewBox="0 0 10 10"><path d="M0.5 1 H9.5 M1.5 4.5 L5 8 L8.5 4.5" fill="none" stroke="#a6a6a6" stroke-width="1.3"/></svg>
<span class="t" style="top:20.5px;font-size:15.3px;color:#a6a6a6;letter-spacing:-0.459px;left:369.5px;transform:scaleX(0.9761);transform-origin:0 50%;">Solar Farm  •  Saved to this PC</span>
<svg class="a" style="left:569.5px;top:27.5px;" width="11" height="7" viewBox="0 0 11 7"><path d="M1 1 L5.5 5.5 L10 1" fill="none" stroke="#a6a6a6" stroke-width="1.4" stroke-linecap="round" stroke-linejoin="round"/></svg>
<div class="a" style="left:1060px;top:9.8px;width:460px;height:40px;border:1px solid #d9d9d9;border-radius:4px;background:#f0f0f0;box-shadow:0 1px 2.5px rgba(0,0,0,.22)"></div>
<svg class="a" style="left:1076px;top:19.7px;" width="20" height="20" viewBox="0 0 20 20"><circle cx="12" cy="7.5" r="5.7" fill="none" stroke="#b2b2b2" stroke-width="1.4"/><path d="M8 11.8 L1.5 18.5" stroke="#b2b2b2" stroke-width="1.4" stroke-linecap="round"/></svg>
<span class="t" style="top:18.9px;font-size:16.5px;color:#b2b2b2;letter-spacing:-0.297px;left:1112px;">Search</span>
<div class="a" style="left:2277px;top:15px;width:30px;height:30px;background:#0f4c8f;border-radius:50%;"></div>
<span class="t" style="top:20.5px;font-size:11.5px;color:#fff;left:2292px;transform:translateX(-50%);">JV</span>
<svg class="a" style="left:2344.3px;top:21.5px;" width="12" height="17" viewBox="0 0 16 22"><path d="M8 1.5 a6 6 0 0 1 3.6 10.8 c-.8.7-1.1 1.4-1.1 2.6 H5.5 c0-1.2-.3-1.9-1.1-2.6 A6 6 0 0 1 8 1.5Z M5.8 17.5 H10.2 M6.6 20 H9.4" fill="none" stroke="#a6a6a6" stroke-width="1.6" stroke-linecap="round"/></svg>
<div class="a" style="left:2403.5px;top:28.7px;width:12.5px;height:1.2px;background:#b4b4b4;"></div>
<svg class="a" style="left:2463px;top:22.8px;" width="14" height="14" viewBox="0 0 16 16"><rect x="1" y="4" width="10.5" height="10.5" rx="2" fill="none" stroke="#b4b4b4" stroke-width="1.35"/><path d="M4 2.2 a2 2 0 0 1 2-1.2 H12.5 a2.5 2.5 0 0 1 2.5 2.5 V10 a2 2 0 0 1-1.2 2" fill="none" stroke="#b4b4b4" stroke-width="1.35"/></svg>
<svg class="a" style="left:2523.3px;top:23.3px;" width="13" height="13" viewBox="0 0 13 13"><path d="M0.5 0.5 L12.5 12.5 M12.5 0.5 L0.5 12.5" stroke="#b4b4b4" stroke-width="1.3"/></svg>
<span class="t" style="top:71.7px;font-size:16.6px;color:#222;letter-spacing:-0.498px;left:27.4px;transform:scaleX(0.9815);transform-origin:0 50%;">File</span>
<span class="t" style="top:71.7px;font-size:16.6px;color:#222;font-weight:700;letter-spacing:0.073px;left:84.4px;">Home</span>
<span class="t" style="top:71.7px;font-size:16.6px;color:#222;letter-spacing:0.114px;left:154px;">Insert</span>
<span class="t" style="top:71.7px;font-size:16.6px;color:#222;letter-spacing:-0.153px;left:221.5px;">Page Layout</span>
<span class="t" style="top:71.7px;font-size:16.6px;color:#222;letter-spacing:-0.082px;left:338.3px;">Formulas</span>
<span class="t" style="top:71.7px;font-size:16.6px;color:#222;letter-spacing:-0.241px;left:431.8px;">Data</span>
<span class="t" style="top:71.7px;font-size:16.6px;color:#222;letter-spacing:-0.498px;left:491.6px;transform:scaleX(0.9896);transform-origin:0 50%;">Review</span>
<span class="t" style="top:71.7px;font-size:16.6px;color:#222;letter-spacing:0.032px;left:567.9px;">View</span>
<span class="t" style="top:71.7px;font-size:16.6px;color:#222;letter-spacing:-0.005px;left:628.7px;">Developer</span>
<span class="t" style="top:71.7px;font-size:16.6px;color:#222;letter-spacing:-0.185px;left:729.6px;">Help</span>
<span class="t" style="top:71.7px;font-size:16.6px;color:#222;letter-spacing:0.216px;left:788.7px;">Acrobat</span>
<div class="a" style="left:84px;top:94px;width:48px;height:3px;background:#107c41;border-radius:1.5px;"></div>
<div class="a" style="left:2287px;top:65px;width:117px;height:29.6px;border:1px solid #8d8d8d;border-radius:5px;background:#fff"></div>
<svg class="a" style="left:2294px;top:72.5px;" width="15" height="14" viewBox="0 0 15 14"><path d="M1.5 1 H13 a.8 .8 0 0 1 .8 .8 V9 a.8 .8 0 0 1-.8 .8 H6 L3 12.8 V9.8 H1.5 a.8 .8 0 0 1-.8-.8 V1.8 a.8 .8 0 0 1 .8-.8Z" fill="none" stroke="#333" stroke-width="1.2"/></svg>
<span class="t" style="top:70.1px;font-size:16.2px;color:#222;letter-spacing:0.486px;left:2313px;transform:scaleX(1.0103);transform-origin:0 50%;">Comments</span>
<div class="a" style="left:2414px;top:65px;width:89px;height:29.6px;border-radius:5px;background:#107c41"></div>
<svg class="a" style="left:2420px;top:71.6px;" width="16" height="16" viewBox="0 0 16 16"><path d="M6 3.5 H3 a1.5 1.5 0 0 0-1.5 1.5 V12.5 a1.5 1.5 0 0 0 1.5 1.5 H11 a1.5 1.5 0 0 0 1.5-1.5 V11 M9.5 1.5 L14 5.5 L9.5 9.5 V7 C7 7 5.5 8 4.5 10 C4.8 6.5 6.5 4.3 9.5 4Z" fill="none" stroke="#fff" stroke-width="1.2" stroke-linejoin="round"/></svg>
<span class="t" style="top:70.1px;font-size:16.2px;color:#fff;letter-spacing:-0.101px;left:2440px;">Share</span>
<svg class="a" style="left:2489.3px;top:78.0px;" width="9" height="6" viewBox="0 0 9 6"><path d="M1 1 L4.5 4.5 L8 1" fill="none" stroke="#fff" stroke-width="1.4" stroke-linecap="round" stroke-linejoin="round"/></svg>
<svg class="a" style="left:2519px;top:68px;" width="24" height="24" viewBox="0 0 24 24"><circle cx="8.5" cy="10" r="3.6" fill="none" stroke="#333" stroke-width="1.3"/><path d="M1.5 22 c0-5 3-7 7-7 s7 2 7 7" fill="none" stroke="#333" stroke-width="1.3"/><path d="M12 1.5 H22.5 V9 H17 L14.5 11.5 V9 H13" fill="none" stroke="#333" stroke-width="1.3" stroke-linejoin="round"/><path d="M15 5.3 L16.6 6.8 L19.5 3.8" fill="none" stroke="#333" stroke-width="1.1"/></svg>
<div class="a" style="left:10px;top:100px;width:2539.5px;height:124px;border-radius:9px;background:#fff;box-shadow:0 1px 3px rgba(0,0,0,.2),0 0 1px rgba(0,0,0,.15)"></div>
<svg class="a" style="left:36px;top:108px;" width="36" height="42" viewBox="0 0 36 42">
<rect x="2" y="8.3" width="25" height="28.5" fill="#fafafa" stroke="#e8851f" stroke-width="2"/>
<rect x="3.7" y="10" width="21.6" height="25.1" fill="none" stroke="#fde6a8" stroke-width="1.4"/>
<path d="M7 11.3 V6.2 H10.3 C10.6 4 12.4 2.6 14.5 2.6 C16.6 2.6 18.4 4 18.7 6.2 H22 V11.3Z" fill="#fafafa" stroke="#7c7c7c" stroke-width="1.6" stroke-linejoin="round"/>
<rect x="18.2" y="18.2" width="16" height="20.6" fill="#fafafa" stroke="#5e5e5e" stroke-width="1.7"/></svg>
<span class="t" style="top:153.0px;font-size:14.6px;letter-spacing:-0.438px;left:34px;transform:scaleX(0.9505);transform-origin:0 50%;">Paste</span>
<svg class="a" style="left:45.9px;top:178.8px;" width="8.2" height="5.5" viewBox="0 0 8.2 5.5"><path d="M1 1 L4.1 4.0 L7.2 1" fill="none" stroke="#333" stroke-width="1.4" stroke-linecap="round" stroke-linejoin="round"/></svg>
<svg class="a" style="left:86px;top:108px;" width="16" height="24" viewBox="0 0 16 24"><path d="M4.1 1.4 L11.6 16.6 M11.4 1.4 L4.3 16.6" stroke="#444" stroke-width="1.3" fill="none"/><circle cx="4.1" cy="18.7" r="2.1" fill="#fff" stroke="#2a8dd4" stroke-width="1.5"/><circle cx="11.8" cy="18.7" r="2.1" fill="#fff" stroke="#2a8dd4" stroke-width="1.5"/></svg>
<span class="t" style="top:110.0px;font-size:14.6px;letter-spacing:-0.240px;left:109px;">Cut</span>
<svg class="a" style="left:84px;top:141px;" width="21" height="21" viewBox="0 0 21 21"><path d="M5.5 16.5 H2 a1.2 1.2 0 0 1-1.2-1.2 V2 A1.2 1.2 0 0 1 2 .8 H8 M8.2 .8 H6.8 V4" fill="none" stroke="#444" stroke-width="1.3"/><path d="M8 4.5 H14.5 L19.5 9.5 V19 a1 1 0 0 1-1 1 H8 a1 1 0 0 1-1-1 V5.5 a1 1 0 0 1 1-1Z M14 4.8 V10 H19.3" fill="#fff" stroke="#444" stroke-width="1.3" stroke-linejoin="round"/><path d="M10 13.5 H16.5 M10 16.5 H16.5" stroke="#666" stroke-width="1.1"/></svg>
<span class="t" style="top:142.0px;font-size:14.6px;letter-spacing:-0.070px;left:109px;">Copy</span>
<svg class="a" style="left:163.9px;top:148.8px;" width="8.2" height="5.5" viewBox="0 0 8.2 5.5"><path d="M1 1 L4.1 4.0 L7.2 1" fill="none" stroke="#333" stroke-width="1.4" stroke-linecap="round" stroke-linejoin="round"/></svg>
<svg class="a" style="left:84px;top:172px;" width="22" height="21" viewBox="0 0 22 21"><path d="M7.6 5.6 L0.8 9.2 L8.8 19.4 L15.4 12.6Z" fill="#fff" stroke="#e27f18" stroke-width="1.4" stroke-linejoin="round"/><path d="M4 10.2 C6 11.2 8.5 13.5 9.2 17.8 L13 14.2 C11 13.5 9.5 12 8.5 9.2Z" fill="#fde3a7"/><path d="M14 6.6 L17.8 2.8 a1.7 1.7 0 0 1 2.4 2.4 L16.4 9" fill="#fff" stroke="#444" stroke-width="1.3"/><path d="M10.2 2.6 L17.2 9.6 L15.1 11.7 L8.1 4.7Z" fill="#fff" stroke="#444" stroke-width="1.3" stroke-linejoin="round"/></svg>
<span class="t" style="top:174.0px;font-size:14.6px;letter-spacing:-0.037px;left:109px;">Format Painter</span>
<span class="t" style="top:202.0px;font-size:13.6px;color:#3b3b3b;letter-spacing:-0.054px;left:81px;">Clipboard</span>
<svg class="a" style="left:211px;top:207px;" width="11" height="11" viewBox="0 0 11 11"><path d="M0.7 8.3 V0.7 H8.3 M3.3 3.3 L9.6 9.6 M9.6 5 V9.6 H5" fill="none" stroke="#3a3a3a" stroke-width="1.25"/></svg>
<div class="a" style="left:225.0px;top:106px;width:1px;height:111px;background:#d4d4d4;"></div>
<div class="a" style="left:236px;top:114.3px;width:143.5px;height:29.5px;border:1px solid #8f8f8f;border-radius:5px;background:#fff"></div>
<span class="t" style="top:120.0px;font-size:15.2px;color:#1b1b1b;letter-spacing:-0.207px;left:239.7px;">Calibri</span>
<svg class="a" style="left:367.9px;top:127.8px;" width="8.2" height="5.5" viewBox="0 0 8.2 5.5"><path d="M1 1 L4.1 4.0 L7.2 1" fill="none" stroke="#333" stroke-width="1.4" stroke-linecap="round" stroke-linejoin="round"/></svg>
<div class="a" style="left:382.3px;top:114.3px;width:61.3px;height:29.5px;border:1px solid #8f8f8f;border-radius:5px;background:#fff"></div>
<span class="t" style="top:120.0px;font-size:15.2px;color:#1b1b1b;letter-spacing:-0.456px;left:386px;transform:scaleX(0.9291);transform-origin:0 50%;">11</span>
<svg class="a" style="left:432.2px;top:127.8px;" width="8.2" height="5.5" viewBox="0 0 8.2 5.5"><path d="M1 1 L4.1 4.0 L7.2 1" fill="none" stroke="#333" stroke-width="1.4" stroke-linecap="round" stroke-linejoin="round"/></svg>
<span class="t" style="top:117.5px;font-size:20px;color:#333;left:452px;">A</span>
<svg class="a" style="left:464.5px;top:117.5px;" width="8" height="5" viewBox="0 0 8 5"><path d="M1 4 L4 1 L7 4" fill="none" stroke="#2a8dd4" stroke-width="1.4"/></svg>
<span class="t" style="top:118.5px;font-size:16.5px;color:#333;left:485.5px;">A</span>
<svg class="a" style="left:495.5px;top:118.5px;" width="8" height="5" viewBox="0 0 8 5"><path d="M1 1 L4 4 L7 1" fill="none" stroke="#2a8dd4" stroke-width="1.4"/></svg>
<div class="a" style="left:236px;top:154.3px;width:29.8px;height:29.5px;border:1px solid #8f8f8f;border-radius:5px;background:#ebebeb"></div>
<span class="t" style="top:158.5px;font-size:17px;color:#333;font-weight:700;left:251.2px;transform:translateX(-50%);">B</span>
<span class="t" style="top:158.5px;font-size:18px;color:#333;font-family:'Liberation Serif';left:283px;transform:translateX(-50%);font-style:italic;">I</span>
<span class="t" style="top:158.0px;font-size:16.5px;color:#333;left:314.3px;transform:translateX(-50%);">U</span>
<div class="a" style="left:308.5px;top:177.2px;width:11.5px;height:1.3px;background:#333;"></div>
<svg class="a" style="left:334.1px;top:167.2px;" width="8.2" height="5.5" viewBox="0 0 8.2 5.5"><path d="M1 1 L4.1 4.0 L7.2 1" fill="none" stroke="#333" stroke-width="1.4" stroke-linecap="round" stroke-linejoin="round"/></svg>
<div class="a" style="left:350.9px;top:154px;width:1px;height:30px;background:#d4d4d4;"></div>
<svg class="a" style="left:359px;top:159px;" width="19" height="20" viewBox="0 0 19 20"><rect x="0.3" y="1" width="18.4" height="14" fill="#f7f7f7"/><path d="M0 0.8 H19" stroke="#111" stroke-width="1.3"/><path d="M0 8.6 H19 M0.7 2.2 V14.8 M9.5 2.2 V14.8 M18.3 2.2 V14.8" stroke="#555" stroke-width="1" stroke-dasharray="1.3 1.5" fill="none"/><circle cx="9.5" cy="8.6" r="1.2" fill="#f7f7f7" stroke="#555" stroke-width=".8"/><path d="M0 15.6 H19" stroke="#111" stroke-width="1.4"/><path d="M0 18.2 H19" stroke="#8c8c8c" stroke-width="1.6"/></svg>
<svg class="a" style="left:388.3px;top:167.2px;" width="8.2" height="5.5" viewBox="0 0 8.2 5.5"><path d="M1 1 L4.1 4.0 L7.2 1" fill="none" stroke="#333" stroke-width="1.4" stroke-linecap="round" stroke-linejoin="round"/></svg>
<div class="a" style="left:405.1px;top:154px;width:1px;height:30px;background:#d4d4d4;"></div>
<svg class="a" style="left:413px;top:158.5px;" width="21" height="21" viewBox="0 0 21 21"><path d="M9.5 1.2 L15.5 8.5 L8.5 13.5 L3.2 9.3 Z" fill="#fff" stroke="#444" stroke-width="1.3" stroke-linejoin="round"/><path d="M9.3 1 C11.5 .2 12.6 1.6 12 4" fill="none" stroke="#444" stroke-width="1.2"/><path d="M14.2 5 C16.8 6.5 17.2 9.5 16 11.8 C14.8 10 14.3 8 14.2 5Z" fill="#2a8dd4" stroke="#1e6fb0" stroke-width=".8"/><rect x="0.6" y="15.2" width="19" height="4.2" fill="#fff" stroke="#bdbdbd" stroke-width="1.1"/></svg>
<svg class="a" style="left:442.2px;top:167.2px;" width="8.2" height="5.5" viewBox="0 0 8.2 5.5"><path d="M1 1 L4.1 4.0 L7.2 1" fill="none" stroke="#333" stroke-width="1.4" stroke-linecap="round" stroke-linejoin="round"/></svg>
<span class="t" style="top:156.0px;font-size:19.5px;color:#333;left:473.8px;transform:translateX(-50%);">A</span>
<div class="a" style="left:464px;top:174.3px;width:20px;height:4.6px;background:#000;"></div>
<svg class="a" style="left:493.2px;top:167.2px;" width="8.2" height="5.5" viewBox="0 0 8.2 5.5"><path d="M1 1 L4.1 4.0 L7.2 1" fill="none" stroke="#333" stroke-width="1.4" stroke-linecap="round" stroke-linejoin="round"/></svg>
<span class="t" style="top:202.0px;font-size:13.6px;color:#3b3b3b;letter-spacing:-0.408px;left:349.4px;transform:scaleX(0.9542);transform-origin:0 50%;">Font</span>
<svg class="a" style="left:503.4px;top:207px;" width="11" height="11" viewBox="0 0 11 11"><path d="M0.7 8.3 V0.7 H8.3 M3.3 3.3 L9.6 9.6 M9.6 5 V9.6 H5" fill="none" stroke="#3a3a3a" stroke-width="1.25"/></svg>
<div class="a" style="left:517.3px;top:106px;width:1px;height:111px;background:#d4d4d4;"></div>
<div class="a" style="left:592.4px;top:114.3px;width:29.6px;height:29.5px;border:1px solid #8f8f8f;border-radius:5px;background:#ebebeb"></div>
<div class="a" style="left:560.3px;top:154.3px;width:29.6px;height:29.5px;border:1px solid #8f8f8f;border-radius:5px;background:#ebebeb"></div>
<svg class="a" style="left:533.5px;top:110px;" width="20" height="20" viewBox="0 0 20 20"><path d="M0.5 9.6 H18.4 M3.5 14.6 H15.5 M0.5 19.5 H18.4" stroke="#444" stroke-width="1.2" fill="none"/></svg>
<svg class="a" style="left:566px;top:110px;" width="20" height="20" viewBox="0 0 20 20"><path d="M0 13.5 H18 M3 18.5 H15 M0 23.5 H18" stroke="#444" stroke-width="1.2" fill="none"/></svg>
<svg class="a" style="left:598px;top:110px;" width="20" height="20" viewBox="0 0 20 20"><path d="M0 18.4 H17.8 M3 23.4 H14.8 M0 28.3 H17.8" stroke="#444" stroke-width="1.2" fill="none"/></svg>
<div class="a" style="left:624.0px;top:114px;width:1px;height:30px;background:#d4d4d4;"></div>
<svg class="a" style="left:631px;top:118px;" width="23" height="22" viewBox="0 0 23 22"><path d="M7.4 19.6 L20.6 6.4 M15.6 6.3 H20.8 V11.5" fill="none" stroke="#2a8dd4" stroke-width="1.5"/><text x="0" y="0" font-size="13.2" font-family="Liberation Sans" fill="#444" text-anchor="middle" transform="translate(9.6,10.6) rotate(-45)">ab</text></svg>
<svg class="a" style="left:659.4px;top:127.2px;" width="8.2" height="5.5" viewBox="0 0 8.2 5.5"><path d="M1 1 L4.1 4.0 L7.2 1" fill="none" stroke="#333" stroke-width="1.4" stroke-linecap="round" stroke-linejoin="round"/></svg>
<div class="a" style="left:695.9px;top:113px;width:1px;height:77.5px;background:#d4d4d4;"></div>
<svg class="a" style="left:710.5px;top:119.5px;" width="21" height="20" viewBox="0 0 21 20"><text x="1" y="9.2" font-size="12.6" font-family="Liberation Sans" fill="#444" letter-spacing="-0.4">ab</text><text x="1.2" y="18.2" font-size="12.6" font-family="Liberation Sans" fill="#444">c</text><path d="M18.3 10 C19 14.5 16 16.2 10 16.2 M13.2 12.9 L9.6 16.2 L13.2 19.5" fill="none" stroke="#2a8dd4" stroke-width="1.4"/></svg>
<span class="t" style="top:120.0px;font-size:14.6px;letter-spacing:0.092px;left:734.6px;">Wrap Text</span>
<svg class="a" style="left:533.5px;top:150px;" width="20" height="20" viewBox="0 0 20 20"><path d="M0 11 H18.5 M0 16.1 H11.5 M0 21.2 H18.5 M0 26.3 H11.5" stroke="#444" stroke-width="1.5" fill="none"/></svg>
<svg class="a" style="left:566px;top:150px;" width="20" height="20" viewBox="0 0 20 20"><path d="M0 11 H18.5 M3.5 16.1 H15 M0 21.2 H18.5 M3.5 26.3 H15" stroke="#444" stroke-width="1.5" fill="none"/></svg>
<svg class="a" style="left:598px;top:150px;" width="20" height="20" viewBox="0 0 20 20"><path d="M0 11 H18.5 M7 16.1 H18.5 M0 21.2 H18.5 M7 26.3 H18.5" stroke="#444" stroke-width="1.5" fill="none"/></svg>
<div class="a" style="left:624.0px;top:154px;width:1px;height:30px;background:#d4d4d4;"></div>
<svg class="a" style="left:633px;top:159px;" width="19" height="19" viewBox="0 0 19 19"><path d="M0 2 H18 M9.5 7 H18 M9.5 12 H18 M0 17 H18" stroke="#444" stroke-width="1.5"/><path d="M7 9.5 H0.8 M3.8 6.3 L0.8 9.5 L3.8 12.7" fill="none" stroke="#2a8dd4" stroke-width="1.4"/></svg>
<svg class="a" style="left:665px;top:159px;" width="19" height="19" viewBox="0 0 19 19"><path d="M0 2 H18 M9.5 7 H18 M9.5 12 H18 M0 17 H18" stroke="#444" stroke-width="1.5"/><path d="M0.5 9.5 H6.7 M3.7 6.3 L6.7 9.5 L3.7 12.7" fill="none" stroke="#2a8dd4" stroke-width="1.4"/></svg>
<svg class="a" style="left:709px;top:158.7px;" width="20" height="19" viewBox="0 0 20 19"><rect x=".7" y=".7" width="18.2" height="17.2" fill="#fff" stroke="#444" stroke-width="1.3"/><path d="M9.8 .7 V4 M9.8 14.5 V18" stroke="#444" stroke-width="1.2"/><rect x=".7" y="4" width="18.2" height="10.4" fill="#fff" stroke="#2a8dd4" stroke-width="1.4"/><path d="M3.6 9.2 H16 M6.4 6.4 L3.4 9.2 L6.4 12 M13.2 6.4 L16.2 9.2 L13.2 12" fill="none" stroke="#2a8dd4" stroke-width="1.4"/></svg>
<span class="t" style="top:160.0px;font-size:14.6px;letter-spacing:0.142px;left:734.6px;">Merge &amp; Center</span>
<svg class="a" style="left:861.1px;top:167.2px;" width="8.2" height="5.5" viewBox="0 0 8.2 5.5"><path d="M1 1 L4.1 4.0 L7.2 1" fill="none" stroke="#333" stroke-width="1.4" stroke-linecap="round" stroke-linejoin="round"/></svg>
<span class="t" style="top:202.0px;font-size:13.6px;color:#3b3b3b;letter-spacing:-0.350px;left:665.5px;">Alignment</span>
<svg class="a" style="left:875.8px;top:207px;" width="11" height="11" viewBox="0 0 11 11"><path d="M0.7 8.3 V0.7 H8.3 M3.3 3.3 L9.6 9.6 M9.6 5 V9.6 H5" fill="none" stroke="#3a3a3a" stroke-width="1.25"/></svg>
<div class="a" style="left:889.9px;top:106px;width:1px;height:111px;background:#d4d4d4;"></div>
<div class="a" style="left:901px;top:114.3px;width:180px;height:29.5px;border:1px solid #8f8f8f;border-radius:5px;background:#fff"></div>
<span class="t" style="top:120.0px;font-size:15.2px;color:#1b1b1b;letter-spacing:-0.456px;left:904.2px;transform:scaleX(0.9921);transform-origin:0 50%;">Custom</span>
<svg class="a" style="left:1068.9px;top:127.8px;" width="8.2" height="5.5" viewBox="0 0 8.2 5.5"><path d="M1 1 L4.1 4.0 L7.2 1" fill="none" stroke="#333" stroke-width="1.4" stroke-linecap="round" stroke-linejoin="round"/></svg>
<span class="t" style="top:159.0px;font-size:21px;color:#333;left:915px;transform:translateX(-50%);">$</span>
<svg class="a" style="left:935.1px;top:167.2px;" width="8.2" height="5.5" viewBox="0 0 8.2 5.5"><path d="M1 1 L4.1 4.0 L7.2 1" fill="none" stroke="#333" stroke-width="1.4" stroke-linecap="round" stroke-linejoin="round"/></svg>
<span class="t" style="top:159.0px;font-size:21px;color:#333;left:967px;transform:translateX(-50%);">%</span>
<svg class="a" style="left:995.5px;top:161px;" width="9" height="16" viewBox="0 0 9 16"><path d="M4.6 .5 a3.6 3.6 0 0 1 3.6 3.8 c0 4.5-2.6 8.2-6.8 10.8 l-.6-.9 c2.4-1.9 3.7-3.8 3.8-6.2 a3.7 3.7 0 0 1-3.6-3.7 A3.7 3.7 0 0 1 4.6 .5Z" fill="#333"/></svg>
<div class="a" style="left:1016.3px;top:154px;width:1px;height:30px;background:#d4d4d4;"></div>
<svg class="a" style="left:1023.5px;top:159px;" width="21" height="20" viewBox="0 0 21 20"><path d="M11.5 5.3 H0.8 M4.2 1.9 L0.8 5.3 L4.2 8.7" fill="none" stroke="#2a8dd4" stroke-width="1.4"/><text x="11" y="9.3" font-size="11.3" font-family="Liberation Sans" fill="#444">.0</text><text x="2.8" y="19.3" font-size="11.3" font-family="Liberation Sans" fill="#444">.00</text></svg>
<svg class="a" style="left:1055.5px;top:159px;" width="21" height="20" viewBox="0 0 21 20"><text x="2.5" y="9.3" font-size="11.3" font-family="Liberation Sans" fill="#444">.00</text><path d="M0.5 14.6 H11 M7.6 11.2 L11 14.6 L7.6 18" fill="none" stroke="#2a8dd4" stroke-width="1.4"/><text x="9.3" y="19.3" font-size="11.3" font-family="Liberation Sans" fill="#444">.0</text></svg>
<span class="t" style="top:202.0px;font-size:13.6px;color:#3b3b3b;letter-spacing:-0.277px;left:956.6px;">Number</span>
<svg class="a" style="left:1076px;top:207px;" width="11" height="11" viewBox="0 0 11 11"><path d="M0.7 8.3 V0.7 H8.3 M3.3 3.3 L9.6 9.6 M9.6 5 V9.6 H5" fill="none" stroke="#3a3a3a" stroke-width="1.25"/></svg>
<div class="a" style="left:1090.0px;top:106px;width:1px;height:111px;background:#d4d4d4;"></div>
<svg class="a" style="left:1128.6px;top:113.6px;" width="37" height="29" viewBox="0 0 37 29"><rect x="1.2" y="1.2" width="34.2" height="26.6" fill="#fafafa" stroke="#5e5e5e" stroke-width="1.5"/>
<path d="M1 10 H35 M1 19 H35 M7.6 1 V28 M23 1 V28 M29.2 1 V28" stroke="#6a6a6a" stroke-width="1.1" fill="none"/>
<rect x="7.6" y="1.2" width="15.2" height="8.9" fill="#fb9299" stroke="#dc2a2a" stroke-width="1.2"/>
<rect x="7.6" y="10.1" width="10" height="8.9" fill="#6fb1e6" stroke="#1f72c4" stroke-width="1.2"/>
<rect x="7.6" y="19" width="17.6" height="8.8" fill="#fb9299" stroke="#dc2a2a" stroke-width="1.2"/></svg>
<span class="t" style="top:151.0px;font-size:14.6px;letter-spacing:0.279px;left:1108.3px;">Conditional</span>
<span class="t" style="top:171.0px;font-size:14.6px;letter-spacing:0.165px;left:1103.6px;">Formatting</span>
<svg class="a" style="left:1180.3px;top:177.2px;" width="8.2" height="5.5" viewBox="0 0 8.2 5.5"><path d="M1 1 L4.1 4.0 L7.2 1" fill="none" stroke="#333" stroke-width="1.4" stroke-linecap="round" stroke-linejoin="round"/></svg>
<svg class="a" style="left:1212px;top:114px;" width="40" height="36" viewBox="0 0 40 36"><rect x="1" y="1" width="34" height="26.5" fill="#fff" stroke="#5a5a5a" stroke-width="1.4"/>
<path d="M1 10 H35 M1 18.5 H35 M12.5 1 V27.5 M24 1 V27.5" stroke="#6a6a6a" stroke-width="1.1" fill="none"/>
<rect x="12.5" y="10" width="22.5" height="17.5" fill="#7db7ea" stroke="#2273c3" stroke-width="1.1"/><path d="M24 10 V27.5 M12.5 18.5 H35" stroke="#2273c3" stroke-width="1.1"/>
<path d="M37.5 9.5 C33 14 27 22 24.5 26.5 L21.5 24.5 C25 19.5 31 12 36 8.2 C37.3 7.6 38.3 8.4 37.5 9.5Z" fill="#fff" stroke="#444" stroke-width="1.2"/>
<path d="M21 24.5 L24.8 27 C24.5 31.5 20 34 11 32.5 C15 31 16 27.5 21 24.5Z" fill="#3d8ed8" stroke="#1f6cb5" stroke-width=".9"/></svg>
<span class="t" style="top:151.0px;font-size:14.6px;letter-spacing:-0.165px;left:1197.4px;">Format as</span>
<span class="t" style="top:171.0px;font-size:14.6px;letter-spacing:-0.158px;left:1205.6px;">Table</span>
<svg class="a" style="left:1244.1px;top:177.2px;" width="8.2" height="5.5" viewBox="0 0 8.2 5.5"><path d="M1 1 L4.1 4.0 L7.2 1" fill="none" stroke="#333" stroke-width="1.4" stroke-linecap="round" stroke-linejoin="round"/></svg>
<div class="a" style="left:1268.5px;top:114.3px;width:431px;height:77.5px;border:1px solid #c9c9c9;border-radius:5px;background:#fff"></div>
<div class="a" style="left:1270.2px;top:117.3px;width:132.5px;height:35.3px;border:1.3px solid #5e5e5e;background:#fff;box-shadow:inset 0 0 0 2.6px #e8e8e8"></div>
<span class="t" style="top:125.3px;font-size:16.8px;color:#000;letter-spacing:0.051px;left:1279.3px;">Normal</span>
<div class="a" style="left:1407.3px;top:121px;width:124.7px;height:27.8px;background:#ffc7ce;"></div>
<span class="t" style="top:125.3px;font-size:16.8px;color:#9c0006;letter-spacing:-0.504px;left:1412.3px;transform:scaleX(0.9701);transform-origin:0 50%;">Bad</span>
<div class="a" style="left:1540px;top:121px;width:125px;height:27.8px;background:#c6efce;"></div>
<span class="t" style="top:125.3px;font-size:16.8px;color:#006100;letter-spacing:-0.441px;left:1545px;">Good</span>
<div class="a" style="left:1273.8px;top:157px;width:125.2px;height:27.8px;background:#ffeb9c;"></div>
<span class="t" style="top:161.5px;font-size:16.8px;color:#9c5700;letter-spacing:0.042px;left:1279.3px;">Neutral</span>
<div class="a" style="left:1407.3px;top:157px;width:124.5px;height:27.8px;border:1px solid #7f7f7f;background:#f2f2f2"></div>
<span class="t" style="top:161.5px;font-size:16.8px;color:#fa7d00;font-weight:700;letter-spacing:-0.504px;left:1412.3px;transform:scaleX(0.9834);transform-origin:0 50%;">Calculation</span>
<div class="a" style="left:1540px;top:157px;width:125px;height:27.8px;border:1px solid #3f3f3f;background:#a5a5a5;box-shadow:inset 0 0 0 1px #a5a5a5,inset 0 0 0 2px #3f3f3f"></div>
<span class="t" style="top:160.8px;font-size:16.8px;color:#fff;font-weight:700;letter-spacing:-0.504px;left:1545px;transform:scaleX(0.9533);transform-origin:0 50%;">Check Cell</span>
<div class="a" style="left:1670.2px;top:114.3px;width:29.5px;height:77.5px;border:1px solid #6e6e6e;border-radius:0 5px 5px 0;background:#fff"></div>
<svg class="a" style="left:1680px;top:149px;" width="10" height="9" viewBox="0 0 10 9"><path d="M0.5 1 H9.5 M1.5 4 L5 7.5 L8.5 4" fill="none" stroke="#333" stroke-width="1.3"/></svg>
<span class="t" style="top:202.5px;font-size:13.6px;color:#3b3b3b;letter-spacing:-0.408px;left:1385.3px;transform:scaleX(0.9282);transform-origin:0 50%;">Styles</span>
<div class="a" style="left:1712.8px;top:106px;width:1px;height:111px;background:#d4d4d4;"></div>
<svg class="a" style="left:1730px;top:114px;" width="41" height="29" viewBox="0 0 41 29"><rect x="3" y="1" width="33" height="26.5" fill="#fafafa" stroke="#5a5a5a" stroke-width="1.4"/><path d="M3 10 H36 M3 18.5 H36 M14 1 V27.5 M25 1 V27.5" stroke="#6a6a6a" stroke-width="1.1" fill="none"/><rect x="14" y="10" width="25.5" height="8.5" fill="#7db7ea" stroke="#2273c3" stroke-width="1.1"/><path d="M27.5 10 V18.5" stroke="#2273c3" stroke-width="1.1"/><path d="M9.6 6.2 L1.4 14.2 L9.6 22.2" fill="none" stroke="#2a8dd4" stroke-width="1.5"/><path d="M16.5 11.6 H7.6 L4.8 14.2 L7.6 16.8 H16.5Z" fill="#fff" stroke="#2a8dd4" stroke-width="1.1"/></svg>
<span class="t" style="top:153.0px;font-size:14.6px;letter-spacing:-0.167px;left:1732.2px;">Insert</span>
<svg class="a" style="left:1745.1px;top:178.8px;" width="8.2" height="5.5" viewBox="0 0 8.2 5.5"><path d="M1 1 L4.1 4.0 L7.2 1" fill="none" stroke="#333" stroke-width="1.4" stroke-linecap="round" stroke-linejoin="round"/></svg>
<svg class="a" style="left:1783.5px;top:114px;" width="41" height="29" viewBox="0 0 41 29"><rect x="3" y="1" width="33" height="26.5" fill="#fafafa" stroke="#5a5a5a" stroke-width="1.4"/><path d="M3 10 H36 M3 18.5 H36 M14 1 V27.5 M25 1 V27.5" stroke="#6a6a6a" stroke-width="1.1" fill="none"/><rect x="8" y="10" width="13" height="8.5" fill="#7db7ea" stroke="#2273c3" stroke-width="1.1"/><path d="M21 9.5 H24.5 L28 14.2 L24.5 19 H21Z" fill="#3d8ed8" stroke="#2273c3" stroke-width=".8"/><path d="M26.5 7.5 L39 21 M39 7.5 L26.5 21" stroke="#e03a3a" stroke-width="1.5"/></svg>
<span class="t" style="top:153.0px;font-size:14.6px;letter-spacing:0.069px;left:1782.8px;">Delete</span>
<svg class="a" style="left:1799.2px;top:178.8px;" width="8.2" height="5.5" viewBox="0 0 8.2 5.5"><path d="M1 1 L4.1 4.0 L7.2 1" fill="none" stroke="#333" stroke-width="1.4" stroke-linecap="round" stroke-linejoin="round"/></svg>
<svg class="a" style="left:1837.5px;top:107px;" width="41" height="36" viewBox="0 0 41 36"><g transform="translate(0,7)"><rect x="3" y="1" width="33" height="26.5" fill="#fafafa" stroke="#5a5a5a" stroke-width="1.4"/><path d="M3 10 H36 M3 18.5 H36 M14 1 V27.5 M25 1 V27.5" stroke="#6a6a6a" stroke-width="1.1" fill="none"/><rect x="12.5" y="10" width="17" height="8.5" fill="#5ea3e3" stroke="#2273c3" stroke-width="1.1"/></g><path d="M11 3.5 H30 M11 1 V6 M30 1 V6" stroke="#2a8dd4" stroke-width="1.3"/></svg>
<span class="t" style="top:151.0px;font-size:14.6px;letter-spacing:-0.036px;left:1834.5px;">Format</span>
<svg class="a" style="left:1852.9px;top:176.8px;" width="8.2" height="5.5" viewBox="0 0 8.2 5.5"><path d="M1 1 L4.1 4.0 L7.2 1" fill="none" stroke="#333" stroke-width="1.4" stroke-linecap="round" stroke-linejoin="round"/></svg>
<span class="t" style="top:202.5px;font-size:13.6px;color:#3b3b3b;letter-spacing:-0.408px;left:1790.5px;transform:scaleX(0.9156);transform-origin:0 50%;">Cells</span>
<div class="a" style="left:1893.0px;top:106px;width:1px;height:111px;background:#d4d4d4;"></div>
<svg class="a" style="left:1910.5px;top:110px;" width="16" height="18" viewBox="0 0 16 18"><path d="M14.8 3.8 V1 H1.2 L8.4 9 L1.2 17 H14.8 V14.2" fill="none" stroke="#333" stroke-width="1.4" stroke-linejoin="miter"/></svg>
<span class="t" style="top:110.0px;font-size:14.6px;letter-spacing:-0.104px;left:1934.7px;">AutoSum</span>
<svg class="a" style="left:2016.2px;top:117.2px;" width="8.2" height="5.5" viewBox="0 0 8.2 5.5"><path d="M1 1 L4.1 4.0 L7.2 1" fill="none" stroke="#333" stroke-width="1.4" stroke-linecap="round" stroke-linejoin="round"/></svg>
<svg class="a" style="left:1909px;top:142.5px;" width="20" height="18" viewBox="0 0 20 18"><rect x=".7" y=".7" width="18.4" height="16.2" fill="#fff" stroke="#444" stroke-width="1.3"/><rect x="1.3" y="1.3" width="17.2" height="2.2" fill="#c9c9c9"/><path d="M.7 3.8 H19" stroke="#444" stroke-width="1.1"/><path d="M10 5.8 V14.2 M6.3 10.8 L10 14.4 L13.7 10.8" fill="none" stroke="#2a8dd4" stroke-width="1.4"/></svg>
<span class="t" style="top:142.0px;font-size:14.6px;letter-spacing:-0.189px;left:1934.7px;">Fill</span>
<svg class="a" style="left:1956.9px;top:148.8px;" width="8.2" height="5.5" viewBox="0 0 8.2 5.5"><path d="M1 1 L4.1 4.0 L7.2 1" fill="none" stroke="#333" stroke-width="1.4" stroke-linecap="round" stroke-linejoin="round"/></svg>
<svg class="a" style="left:1908.5px;top:173px;" width="21" height="21" viewBox="0 0 21 21"><path d="M12.5 1.2 L19.8 8.5 L8.8 19.5 L1.5 12.2 Z" fill="#fff" stroke="#a43bb0" stroke-width="1.4" stroke-linejoin="round"/><path d="M6.2 7.6 L13.4 14.8 L8.8 19.4 L1.6 12.2Z" fill="#d98fe0" stroke="#a43bb0" stroke-width="1.2" stroke-linejoin="round"/></svg>
<span class="t" style="top:174.0px;font-size:14.6px;letter-spacing:-0.438px;left:1934.7px;transform:scaleX(0.9943);transform-origin:0 50%;">Clear</span>
<svg class="a" style="left:1972.2px;top:180.8px;" width="8.2" height="5.5" viewBox="0 0 8.2 5.5"><path d="M1 1 L4.1 4.0 L7.2 1" fill="none" stroke="#333" stroke-width="1.4" stroke-linecap="round" stroke-linejoin="round"/></svg>
<svg class="a" style="left:2045px;top:110px;" width="39" height="37" viewBox="0 0 39 37"><text x="0.5" y="17" font-size="20.5" font-family="Liberation Sans" fill="#2a8dd4">A</text><text x="0.8" y="33.6" font-size="20.5" font-family="Liberation Sans" fill="#333">Z</text><path d="M17 10 H36.5 V11.5 L29.4 19.4 V28.8 H24.5 V19.4 L17 11.5Z" fill="#fafafa" stroke="#444" stroke-width="1.4" stroke-linejoin="round"/></svg>
<span class="t" style="top:151.0px;font-size:14.6px;letter-spacing:0.240px;left:2042.2px;">Sort &amp;</span>
<span class="t" style="top:171.0px;font-size:14.6px;letter-spacing:-0.023px;left:2040.5px;">Filter</span>
<svg class="a" style="left:2077.3px;top:177.4px;" width="8.2" height="5.5" viewBox="0 0 8.2 5.5"><path d="M1 1 L4.1 4.0 L7.2 1" fill="none" stroke="#333" stroke-width="1.4" stroke-linecap="round" stroke-linejoin="round"/></svg>
<svg class="a" style="left:2102px;top:109px;" width="38" height="39" viewBox="0 0 38 39"><circle cx="23.5" cy="14.5" r="12.8" fill="#fff" stroke="#444" stroke-width="1.5"/><path d="M14.2 23.8 L1.5 36.5" stroke="#444" stroke-width="1.6" stroke-linecap="round"/></svg>
<span class="t" style="top:151.0px;font-size:14.6px;letter-spacing:0.152px;left:2099.5px;">Find &amp;</span>
<span class="t" style="top:171.0px;font-size:14.6px;letter-spacing:-0.194px;left:2094.5px;">Select</span>
<svg class="a" style="left:2138.5px;top:177.4px;" width="8.2" height="5.5" viewBox="0 0 8.2 5.5"><path d="M1 1 L4.1 4.0 L7.2 1" fill="none" stroke="#333" stroke-width="1.4" stroke-linecap="round" stroke-linejoin="round"/></svg>
<span class="t" style="top:202.7px;font-size:13.6px;color:#3b3b3b;letter-spacing:-0.311px;left:2007.2px;">Editing</span>
<div class="a" style="left:2159.9px;top:106px;width:1px;height:111px;background:#d4d4d4;"></div>
<svg class="a" style="left:2181px;top:110px;" width="36" height="36" viewBox="0 0 36 36"><rect x="1" y="1" width="34" height="34" fill="#fff" stroke="#e2592a" stroke-width="1.8"/><rect x="4.4" y="4.4" width="12" height="11.8" fill="#fff" stroke="#e2592a" stroke-width="1.5"/><rect x="4.4" y="19.6" width="12" height="11.8" fill="#fff" stroke="#e2592a" stroke-width="1.5"/><rect x="19.6" y="4.4" width="12" height="11.8" fill="#fff" stroke="#e2592a" stroke-width="1.5"/><rect x="19.6" y="19.6" width="12" height="11.8" fill="#fff" stroke="#e2592a" stroke-width="1.5"/></svg>
<span class="t" style="top:151.0px;font-size:14.6px;letter-spacing:0.245px;left:2173.5px;">Add-ins</span>
<span class="t" style="top:202.7px;font-size:13.6px;color:#3b3b3b;letter-spacing:-0.299px;left:2176.5px;">Add-ins</span>
<div class="a" style="left:2236.9px;top:106px;width:1px;height:111px;background:#d4d4d4;"></div>
<svg class="a" style="left:2258px;top:110px;" width="37" height="37" viewBox="0 0 37 37"><rect x="1" y="1" width="34" height="33.5" fill="#fafafa" stroke="#5a5a5a" stroke-width="1.5"/><rect x="1.7" y="1.7" width="32.6" height="4.6" fill="#c8c8c8"/>
<path d="M1 6.5 H35 M1 17 H35 M1 26.5 H35 M12.5 26.5 V34.5 M24 26.5 V34.5 M4 17 h3" stroke="#7a7a7a" stroke-width="1.1" fill="none"/>
<circle cx="17.5" cy="16" r="11" fill="#fff" stroke="#444" stroke-width="1.5"/><path d="M25.5 24 L35.5 34.5" stroke="#444" stroke-width="1.8"/>
<rect x="10.8" y="15" width="4" height="6" fill="#d0d0d0" stroke="#555" stroke-width=".9"/><rect x="14.8" y="10" width="4" height="11" fill="#d0d0d0" stroke="#555" stroke-width=".9"/><rect x="18.8" y="12.5" width="4" height="8.5" fill="#3d8ed8" stroke="#1f6cb5" stroke-width=".9"/></svg>
<span class="t" style="top:151.0px;font-size:14.6px;letter-spacing:-0.132px;left:2250.5px;">Analyze</span>
<span class="t" style="top:171.0px;font-size:14.6px;letter-spacing:-0.057px;left:2260.8px;">Data</span>
<div class="a" style="left:2313.9px;top:106px;width:1px;height:111px;background:#d4d4d4;"></div>
<svg class="a" style="left:2339.5px;top:112.5px;" width="33" height="36" viewBox="0 0 33 36"><path d="M15 27.5 H4 a3 3 0 0 1-3-3 V4 a3 3 0 0 1 3-3 H14.5 L24 9.5 V17" fill="none" stroke="#2f6fe4" stroke-width="1.5" stroke-linejoin="round"/><path d="M7 20 C10 16.5 12.2 11.5 11.8 8.5 C11.5 6.6 9.8 7 10 9 C10.5 13 14.5 16.8 18 17 C19.8 17 19.5 15.3 17.8 15.3 C14 15.2 9 17.5 7 20Z" fill="none" stroke="#2f6fe4" stroke-width="1"/><g fill="none" stroke="#2f6fe4" stroke-width="1.8" stroke-linecap="round"><path d="M22 24.5 L25.5 21 a3.6 3.6 0 0 1 5.1 5.1 L28.8 27.9"/><path d="M24.5 28.8 L21 32.3 a3.6 3.6 0 0 1-5.1-5.1 L17.7 25.4"/></g></svg>
<span class="t" style="top:151.0px;font-size:14.6px;letter-spacing:-0.269px;left:2329.3px;">Create</span>
<span class="t" style="top:171.0px;font-size:14.6px;letter-spacing:-0.438px;left:2332.5px;transform:scaleX(0.9497);transform-origin:0 50%;">a PDF</span>
<svg class="a" style="left:2416.5px;top:112.5px;" width="33" height="36" viewBox="0 0 33 36"><path d="M15 27.5 H4 a3 3 0 0 1-3-3 V4 a3 3 0 0 1 3-3 H14.5 L24 9.5 V17" fill="none" stroke="#2f6fe4" stroke-width="1.5" stroke-linejoin="round"/><path d="M7 20 C10 16.5 12.2 11.5 11.8 8.5 C11.5 6.6 9.8 7 10 9 C10.5 13 14.5 16.8 18 17 C19.8 17 19.5 15.3 17.8 15.3 C14 15.2 9 17.5 7 20Z" fill="none" stroke="#2f6fe4" stroke-width="1"/><g fill="none" stroke="#2f6fe4" stroke-width="1.8" stroke-linecap="round"><path d="M22 24.5 L25.5 21 a3.6 3.6 0 0 1 5.1 5.1 L28.8 27.9"/><path d="M24.5 28.8 L21 32.3 a3.6 3.6 0 0 1-5.1-5.1 L17.7 25.4"/></g></svg>
<span class="t" style="top:151.0px;font-size:14.6px;letter-spacing:-0.352px;left:2385px;">Create a PDF</span>
<span class="t" style="top:171.0px;font-size:14.6px;letter-spacing:-0.058px;left:2381.8px;">and Share link</span>
<span class="t" style="top:202.7px;font-size:13.6px;color:#3b3b3b;letter-spacing:-0.045px;left:2356.2px;">Adobe Acrobat</span>
<div class="a" style="left:2485.8px;top:106px;width:1px;height:111px;background:#d4d4d4;"></div>
<svg class="a" style="left:2521px;top:206.5px;" width="14" height="8" viewBox="0 0 14 8"><path d="M1 7 L7 1 L13 7" fill="none" stroke="#333" stroke-width="1.4"/></svg>
<div class="a" style="left:10px;top:234.3px;width:126.8px;height:29.4px;border:1px solid #d2d2d2;border-radius:5px;background:#fff;"></div>
<span class="t" style="top:238.9px;font-size:14.6px;color:#222;letter-spacing:-0.180px;left:17.5px;">B8</span>
<svg class="a" style="left:117.0px;top:246.8px;" width="12" height="7.5" viewBox="0 0 12 7.5"><path d="M1 1 L6.0 6.0 L11 1" fill="none" stroke="#333" stroke-width="1.5" stroke-linecap="round" stroke-linejoin="round"/></svg>
<div class="a" style="left:148.2px;top:243.1px;width:2.6px;height:2.6px;background:#333;"></div>
<div class="a" style="left:148.2px;top:248.2px;width:2.6px;height:2.6px;background:#333;"></div>
<div class="a" style="left:148.2px;top:253.29999999999998px;width:2.6px;height:2.6px;background:#333;"></div>
<div class="a" style="left:162px;top:234.3px;width:106.8px;height:29.4px;border:1px solid #d2d2d2;border-radius:5px;background:#fff;"></div>
<svg class="a" style="left:170.5px;top:242px;" width="15" height="15" viewBox="0 0 15 15"><path d="M0.5 0.5 L14.5 14.5 M14.5 0.5 L0.5 14.5" stroke="#b4b4b4" stroke-width="1.3"/></svg>
<svg class="a" style="left:197.5px;top:242px;" width="21" height="14" viewBox="0 0 21 14"><path d="M0.8 7.5 L6.8 13 L20 0.8" fill="none" stroke="#b4b4b4" stroke-width="1.3"/></svg>
<span class="t" style="top:238.6px;font-size:19px;color:#333;font-weight:700;letter-spacing:-0.300px;font-family:'Liberation Serif';left:229px;font-style:italic;">fx</span>
<svg class="a" style="left:254.7px;top:247.0px;" width="11" height="7" viewBox="0 0 11 7"><path d="M1 1 L5.5 5.5 L10 1" fill="none" stroke="#666" stroke-width="1.3" stroke-linecap="round" stroke-linejoin="round"/></svg>
<div class="a" style="left:274px;top:234.3px;width:2275.6px;height:29.4px;border:1px solid #d2d2d2;border-radius:5px;background:#fff;"></div>
<span class="t" style="top:239.0px;font-size:14.6px;color:#222;letter-spacing:0.438px;left:287.3px;transform:scaleX(1.0546);transform-origin:0 50%;">=B7</span>
<svg class="a" style="left:2531.5px;top:245.2px;" width="14" height="8.5" viewBox="0 0 14 8.5"><path d="M1 1 L7.0 7.0 L13 1" fill="none" stroke="#444" stroke-width="1.5" stroke-linecap="round" stroke-linejoin="round"/></svg>
<div class="a" style="left:2534px;top:271px;width:26px;height:1043px;background:#f0f0f0;"></div>
<div class="a" style="left:2538.5px;top:272px;width:19px;height:1043px;border-radius:9.5px;background:#f6f6f6"></div>
<svg class="a" style="left:2541.5px;top:277.5px;" width="12" height="10" viewBox="0 0 12 10"><path d="M6 0.8 L11.4 8 Q11.8 9 10.8 9 H1.2 Q.2 9 .6 8Z" fill="#6f6f6f"/></svg>
<div class="a" style="left:2542px;top:293px;width:11.2px;height:871px;border-radius:5.6px;background:#707070"></div>
<svg class="a" style="left:2541.5px;top:1300.7px;" width="12" height="10" viewBox="0 0 12 10"><path d="M6 9.2 L11.4 2 Q11.8 1 10.8 1 H1.2 Q.2 1 .6 2Z" fill="#6f6f6f"/></svg>
<div class="a" style="left:0px;top:1313px;width:2534px;height:40px;background:#f0f0f0;"></div>
<div class="a" style="left:0px;top:1313px;width:2534px;height:1px;background:#e3e3e3;"></div>
<svg class="a" style="left:31.5px;top:1326px;" width="9" height="13" viewBox="0 0 9 13"><path d="M7.5 0.7 L1.3 6.3 L7.5 12" fill="none" stroke="#444" stroke-width="1.4"/></svg>
<svg class="a" style="left:72px;top:1326px;" width="9" height="13" viewBox="0 0 9 13"><path d="M1.3 0.7 L7.5 6.3 L1.3 12" fill="none" stroke="#444" stroke-width="1.4"/></svg>
<div class="a" style="left:107.9px;top:1330.8px;width:3.2px;height:3.2px;background:#444;border-radius:50%;"></div>
<div class="a" style="left:113.4px;top:1330.8px;width:3.2px;height:3.2px;background:#444;border-radius:50%;"></div>
<div class="a" style="left:118.9px;top:1330.8px;width:3.2px;height:3.2px;background:#444;border-radius:50%;"></div>
<div class="a" style="left:141.4px;top:1318.3px;width:164.6px;height:29.4px;border-radius:5px;background:#ffffcc"></div>
<span class="t" style="top:1323.8px;font-size:17.4px;color:#1f1f1f;letter-spacing:-0.093px;left:153.7px;">Deployment Costs</span>
<div class="a" style="left:311.1px;top:1322.5px;width:1px;height:21.5px;background:#d2d2d2;"></div>
<div class="a" style="left:317.5px;top:1318.3px;width:145.2px;height:29.4px;border-radius:5px;background:#ffffcc"></div>
<span class="t" style="top:1323.8px;font-size:17.4px;color:#1f1f1f;letter-spacing:-0.372px;left:329px;">Capacity Curves</span>
<div class="a" style="left:467.8px;top:1322.5px;width:1px;height:21.5px;background:#d2d2d2;"></div>
<div class="a" style="left:474.3px;top:1318.3px;width:109.7px;height:29.4px;border-radius:5px;background:#ffffcc"></div>
<span class="t" style="top:1323.8px;font-size:17.4px;color:#1f1f1f;letter-spacing:-0.293px;left:486.3px;">Seasonality</span>
<div class="a" style="left:589.1px;top:1322.5px;width:1px;height:21.5px;background:#d2d2d2;"></div>
<div class="a" style="left:595.3px;top:1318.3px;width:87.9px;height:29.4px;border-radius:5px;background:#ffffcc"></div>
<span class="t" style="top:1323.8px;font-size:17.4px;color:#1f1f1f;letter-spacing:-0.522px;left:606.5px;">Revenue</span>
<div class="a" style="left:688.3000000000001px;top:1322.5px;width:1px;height:21.5px;background:#d2d2d2;"></div>
<div class="a" style="left:694.4px;top:1318.3px;width:62.6px;height:29.4px;border-radius:5px;background:#ffffcc"></div>
<span class="t" style="top:1323.8px;font-size:17.4px;color:#1f1f1f;letter-spacing:-0.522px;left:704.3px;transform:scaleX(0.9126);transform-origin:0 50%;">OPEX</span>
<div class="a" style="left:762.1px;top:1322.5px;width:1px;height:21.5px;background:#d2d2d2;"></div>
<div class="a" style="left:768.3px;top:1318.3px;width:72.7px;height:29.4px;border-radius:5px;background:#ffffcc"></div>
<span class="t" style="top:1323.8px;font-size:17.4px;color:#1f1f1f;letter-spacing:-0.522px;left:779.2px;transform:scaleX(0.9102);transform-origin:0 50%;">CAPEX</span>
<div class="a" style="left:846.1px;top:1322.5px;width:1px;height:21.5px;background:#d2d2d2;"></div>
<div class="a" style="left:852.7px;top:1318.3px;width:46.5px;height:29.4px;border-radius:5px;background:#ffffcc"></div>
<span class="t" style="top:1323.8px;font-size:17.4px;color:#1f1f1f;letter-spacing:-0.522px;left:863.4px;transform:scaleX(0.8308);transform-origin:0 50%;">FTE</span>
<div class="a" style="left:904.3000000000001px;top:1322.5px;width:1px;height:21.5px;background:#d2d2d2;"></div>
<div class="a" style="left:911.2px;top:1318.3px;width:64.7px;height:29.4px;border-radius:5px;background:#ffffcc"></div>
<span class="t" style="top:1323.8px;font-size:17.4px;color:#1f1f1f;letter-spacing:-0.522px;left:920.3px;">Loan1</span>
<div class="a" style="left:981.0px;top:1322.5px;width:1px;height:21.5px;background:#d2d2d2;"></div>
<div class="a" style="left:987.1px;top:1318.3px;width:67.9px;height:29.4px;border-radius:5px;background:#ffffcc"></div>
<span class="t" style="top:1323.8px;font-size:17.4px;color:#1f1f1f;letter-spacing:-0.522px;left:998.4px;">Loan2</span>
<div class="a" style="left:1060.1px;top:1322.5px;width:1px;height:21.5px;background:#d2d2d2;"></div>
<div class="a" style="left:1065.9px;top:1318.3px;width:67.9px;height:29.4px;border-radius:5px;background:#ffffcc"></div>
<span class="t" style="top:1323.8px;font-size:17.4px;color:#1f1f1f;letter-spacing:-0.522px;left:1077.5px;">Loan3</span>
<div class="a" style="left:1138.8999999999999px;top:1322.5px;width:1px;height:21.5px;background:#d2d2d2;"></div>
<div class="a" style="left:1145.4px;top:1318.3px;width:98.4px;height:29.4px;border-radius:5px;background:#ffffcc"></div>
<span class="t" style="top:1323.8px;font-size:17.4px;color:#1f1f1f;letter-spacing:-0.189px;left:1155.9px;">Cap Table</span>
<div class="a" style="left:1248.8999999999999px;top:1322.5px;width:1px;height:21.5px;background:#d2d2d2;"></div>
<div class="a" style="left:1255.4px;top:1318.3px;width:125.6px;height:29.4px;border-radius:5px;background:#ffffcc"></div>
<span class="t" style="top:1323.8px;font-size:17.4px;color:#1f1f1f;letter-spacing:-0.235px;left:1267.4px;">Startup Costs</span>
<div class="a" style="left:1386.1px;top:1322.5px;width:1px;height:21.5px;background:#d2d2d2;"></div>
<div class="a" style="left:1392.2px;top:1318.3px;width:138.5px;height:29.4px;border-radius:5px;background:#ffffcc"></div>
<span class="t" style="top:1323.8px;font-size:17.4px;color:#1f1f1f;letter-spacing:0.040px;left:1404.5px;">Terminal Value</span>
<div class="a" style="left:1535.8px;top:1322.5px;width:1px;height:21.5px;background:#d2d2d2;"></div>
<div class="a" style="left:1542px;top:1318.3px;width:63.0px;height:29.4px;border-radius:5px;background:#7f7f7f"></div>
<span class="t" style="top:1323.8px;font-size:17.4px;color:#fff;letter-spacing:0.071px;left:1552.5px;">IS- M</span>
<div class="a" style="left:1610.1px;top:1322.5px;width:1px;height:21.5px;background:#d2d2d2;"></div>
<div class="a" style="left:1616.2px;top:1318.3px;width:57.6px;height:29.4px;border-radius:5px;background:#7f7f7f"></div>
<span class="t" style="top:1323.8px;font-size:17.4px;color:#fff;letter-spacing:-0.141px;left:1627px;">IS- A</span>
<div class="a" style="left:1678.8999999999999px;top:1322.5px;width:1px;height:21.5px;background:#d2d2d2;"></div>
<div class="a" style="left:1685.4px;top:1318.3px;width:67.3px;height:29.4px;border-radius:5px;background:#7f7f7f"></div>
<span class="t" style="top:1323.8px;font-size:17.4px;color:#fff;letter-spacing:-0.322px;left:1696.3px;">BS- M</span>
<div class="a" style="left:1757.8px;top:1322.5px;width:1px;height:21.5px;background:#d2d2d2;"></div>
<div class="a" style="left:1763.8px;top:1318.3px;width:63.8px;height:29.4px;border-radius:5px;background:#7f7f7f"></div>
<span class="t" style="top:1323.8px;font-size:17.4px;color:#fff;letter-spacing:-0.294px;left:1774.6px;">BS- A</span>
<div class="a" style="left:1832.6999999999998px;top:1322.5px;width:1px;height:21.5px;background:#d2d2d2;"></div>
<div class="a" style="left:1839px;top:1318.3px;width:67.6px;height:29.4px;border-radius:5px;background:#7f7f7f"></div>
<span class="t" style="top:1323.8px;font-size:17.4px;color:#fff;letter-spacing:-0.359px;left:1850px;">CF- M</span>
<div class="a" style="left:1911.6999999999998px;top:1322.5px;width:1px;height:21.5px;background:#d2d2d2;"></div>
<div class="a" style="left:1918px;top:1318.3px;width:62.5px;height:29.4px;border-radius:5px;background:#7f7f7f"></div>
<span class="t" style="top:1323.8px;font-size:17.4px;color:#fff;letter-spacing:-0.491px;left:1928.4px;">CF- A</span>
<div class="a" style="left:1985.6px;top:1322.5px;width:1px;height:21.5px;background:#d2d2d2;"></div>
<div class="a" style="left:1992px;top:1313px;width:120.5px;height:35px;border-radius:0 0 7px 7px;border:1px solid #d8d8d8;border-top:none;background:linear-gradient(#ffffff 0%,#f1e9f6 32%,#dccbe9 65%,#c9b0dd 100%);box-shadow:inset 0 -1.5px 0 #fbf9fc,inset 1.5px 0 0 #fbf9fc,inset -1.5px 0 0 #fbf9fc"></div>
<div class="a" style="left:1993px;top:1312px;width:118.5px;height:2px;background:#fff;"></div>
<span class="t" style="top:1320.2px;font-size:17.4px;color:#1f1f1f;letter-spacing:-0.306px;left:2002.3px;-webkit-text-stroke:0.6px #1f1f1f;">DCF Analysis</span>
<div class="a" style="left:2002.3px;top:1343.1px;width:100.7px;height:2.2px;background:#107c41;"></div>
<div class="a" style="left:2118px;top:1322.5px;width:1px;height:21.5px;background:#d2d2d2;"></div>
<div class="a" style="left:2123.9px;top:1318.3px;width:75px;height:29.4px;border-radius:5px;background:#7030a0"></div>
<span class="t" style="top:1323.8px;font-size:17.4px;color:#fff;letter-spacing:-0.393px;left:2135px;">Visuals</span>
<div class="a" style="left:2204px;top:1322.5px;width:1px;height:21.5px;background:#d2d2d2;"></div>
<div class="a" style="left:2210px;top:1318.3px;width:3.2px;height:29.4px;border-radius:4px 0 0 4px;background:#7030a0"></div>
<div class="a" style="left:2224.9px;top:1330.8px;width:3.2px;height:3.2px;background:#444;border-radius:50%;"></div>
<div class="a" style="left:2230.4px;top:1330.8px;width:3.2px;height:3.2px;background:#444;border-radius:50%;"></div>
<div class="a" style="left:2235.9px;top:1330.8px;width:3.2px;height:3.2px;background:#444;border-radius:50%;"></div>
<svg class="a" style="left:2265px;top:1325px;" width="15" height="15" viewBox="0 0 15 15"><path d="M7.5 0.5 V14.5 M0.5 7.5 H14.5" stroke="#333" stroke-width="1.4"/></svg>
<div class="a" style="left:2311.2px;top:1326.5px;width:3.2px;height:3.2px;background:#444;border-radius:1px;"></div>
<div class="a" style="left:2311.2px;top:1332.0px;width:3.2px;height:3.2px;background:#444;border-radius:1px;"></div>
<div class="a" style="left:2311.2px;top:1337.5px;width:3.2px;height:3.2px;background:#444;border-radius:1px;"></div>
<div class="a" style="left:2333px;top:1323.5px;width:203.5px;height:18.5px;border-radius:9.5px;background:#f6f6f6"></div>
<svg class="a" style="left:2338.5px;top:1327px;" width="10" height="12" viewBox="0 0 10 12"><path d="M0.8 6 L8 .6 Q9 .2 9 1.2 V10.8 Q9 11.8 8 11.4Z" fill="#6f6f6f"/></svg>
<div class="a" style="left:2353.3px;top:1327px;width:161.3px;height:11.2px;border-radius:5.6px;background:#707070"></div>
<svg class="a" style="left:2521px;top:1327px;" width="10" height="12" viewBox="0 0 10 12"><path d="M9.2 6 L2 .6 Q1 .2 1 1.2 V10.8 Q1 11.8 2 11.4Z" fill="#6f6f6f"/></svg>
<div class="a" style="left:0px;top:1353px;width:2560px;height:27.5px;background:#f4f4f4;"></div>
<div class="a" style="left:0px;top:1352.2px;width:2560px;height:1.2px;background:#fafafa;"></div>
<span class="t" style="top:1358.0px;font-size:13.4px;color:#3a3a3a;letter-spacing:-0.402px;left:14px;transform:scaleX(0.9807);transform-origin:0 50%;">Ready</span>
<svg class="a" style="left:75px;top:1358px;" width="19" height="18" viewBox="0 0 19 18"><path d="M1 16 V2 H17 V6" fill="none" stroke="#444" stroke-width="1.3"/><path d="M1 5 H17" stroke="#444" stroke-width="1.1"/><path d="M3.5 8.5 H7 M3.5 11.5 H6 M3.5 14.5 H6" stroke="#444" stroke-width="1.2"/><circle cx="12.5" cy="12" r="5.2" fill="#f3f3f3" stroke="#444" stroke-width="1.3"/><circle cx="12.5" cy="12" r="2.5" fill="#333"/></svg>
<svg class="a" style="left:114.5px;top:1357.5px;" width="19" height="20" viewBox="0 0 19 20"><circle cx="8.8" cy="3.2" r="2.3" fill="none" stroke="#333" stroke-width="1.2"/><path d="M1.2 4.8 C3.5 7.5 6 7.8 6.2 8.2 V11.5 L3.2 17.2 M16 4.2 C14 7.5 11.6 7.8 11.4 8.2 V11.5 L12.3 13.2 M8.8 12.2 L6.8 16.2" fill="none" stroke="#333" stroke-width="1.35" stroke-linecap="round" stroke-linejoin="round"/><path d="M11.2 11.8 L17.8 18.4 M17.8 11.8 L11.2 18.4" stroke="#333" stroke-width="1.3"/></svg>
<span class="t" style="top:1358.0px;font-size:13.2px;color:#262626;font-weight:700;letter-spacing:-0.215px;left:137px;">Accessibility: Investigate</span>
<div class="a" style="left:2188px;top:1353.5px;width:50px;height:27px;background:#e1e1e1;"></div>
<svg class="a" style="left:2204.5px;top:1357.7px;" width="17" height="17" viewBox="0 0 17 17"><rect x=".7" y=".7" width="15.4" height="15.4" fill="none" stroke="#333" stroke-width="1.3"/><path d="M.7 5.8 H16 M.7 11 H16 M5.8 .7 V16 M11 .7 V16" stroke="#333" stroke-width="1.2"/></svg>
<svg class="a" style="left:2254px;top:1357.7px;" width="18" height="17" viewBox="0 0 18 17"><rect x=".7" y=".7" width="16.4" height="15.4" rx="1" fill="none" stroke="#333" stroke-width="1.3"/><rect x="4.2" y="4" width="9.4" height="9" fill="none" stroke="#333" stroke-width="1.2"/><path d="M6.2 7 H11.6 M6.2 10 H11.6" stroke="#333" stroke-width="1.1"/></svg>
<svg class="a" style="left:2304px;top:1357.7px;" width="18" height="17" viewBox="0 0 18 17"><rect x=".7" y=".7" width="16.4" height="15.4" fill="none" stroke="#333" stroke-width="1.3"/><path d="M.7 9.5 H17 M6.5 .7 V9.5 M11.5 .7 V5.5" stroke="#333" stroke-width="1.3" fill="none"/></svg>
<div class="a" style="left:2344.5px;top:1366.7px;width:10px;height:1.2px;background:#444;"></div>
<div class="a" style="left:2361px;top:1366.8px;width:124.5px;height:1px;background:#6a6a6a;"></div>
<div class="a" style="left:2422.7px;top:1363px;width:1px;height:8.5px;background:#6a6a6a;"></div>
<div class="a" style="left:2408px;top:1360px;width:5px;height:14.5px;background:#5e5e5e;border-radius:1px;"></div>
<svg class="a" style="left:2491.5px;top:1361.5px;" width="11" height="11" viewBox="0 0 11 11"><path d="M5.5 0 V11 M0 5.5 H11" stroke="#444" stroke-width="1.2"/></svg>
<span class="t" style="top:1357.3px;font-size:12.6px;color:#3a3a3a;letter-spacing:-0.378px;left:2518px;">80%</span>
<div class="a" style="left:0px;top:1380.3px;width:2560px;height:60px;background:#cde3f3;"></div>
<div class="a" style="left:0px;top:1380.3px;width:2560px;height:1px;background:#c3d5e2;"></div>
<div class="a" style="left:27px;top:1397px;width:24.5px;height:24.5px;border-radius:50%;background:linear-gradient(135deg,#f7bd2e 10%,#f4901f 50%,#ee5a17 92%)"></div>
<div class="a" style="left:38.8px;top:1388px;width:19.6px;height:19.6px;border-radius:50%;background:#c42b1c"></div>
<span class="t" style="top:1388.0px;font-size:13px;color:#fff;font-weight:700;left:48.6px;transform:translateX(-50%);">1</span>
<span class="t" style="top:1389.5px;font-size:14.6px;color:#222;letter-spacing:-0.438px;left:65px;">44°F</span>
<span class="t" style="top:1409.5px;font-size:14.6px;color:#5c5c5c;letter-spacing:-0.178px;left:65px;">Sunny</span>
<svg class="a" style="left:932px;top:1396px;" width="29" height="29" viewBox="0 0 29 29"><defs><linearGradient id="wg" gradientUnits="userSpaceOnUse" x1="0" y1="0" x2="29" y2="29"><stop offset="0" stop-color="#4cc7fb"/><stop offset="1" stop-color="#0467d3"/></linearGradient></defs><rect x="0" y="0" width="13.6" height="13.6" rx="1.2" fill="url(#wg)"/><rect x="0" y="15.2" width="13.6" height="13.6" rx="1.2" fill="url(#wg)"/><rect x="15.2" y="0" width="13.6" height="13.6" rx="1.2" fill="url(#wg)"/><rect x="15.2" y="15.2" width="13.6" height="13.6" rx="1.2" fill="url(#wg)"/></svg>
<div class="a" style="left:979px;top:1390.5px;width:273px;height:38.8px;border-radius:19.4px;background:#f0f6fb;border:1px solid #c3d3df"></div>
<svg class="a" style="left:992px;top:1400.5px;" width="20" height="20" viewBox="0 0 20 20"><circle cx="8.2" cy="8.2" r="6.3" fill="none" stroke="#1e1e1e" stroke-width="2"/><path d="M12.8 12.8 L18 18" stroke="#1e1e1e" stroke-width="2.2" stroke-linecap="round"/></svg>
<span class="t" style="top:1401.0px;font-size:16.8px;color:#5a5a5a;letter-spacing:-0.495px;left:1024.8px;">Search</span>
<svg class="a" style="left:1192px;top:1395px;" width="46" height="32" viewBox="0 0 46 32"><ellipse cx="24" cy="30.3" rx="23" ry="1.8" fill="#7f8f45" opacity=".9"/>
<rect x="6" y="3" width="11" height="26" fill="#e2cdb9" stroke="#8d7565" stroke-width=".8"/><rect x="27" y="3" width="11" height="26" fill="#e2cdb9" stroke="#8d7565" stroke-width=".8"/>
<rect x="17" y="11" width="10" height="18" fill="#e8d6c4" stroke="#8d7565" stroke-width=".8"/>
<path d="M8 5 h2.5 v7 h-2.5z M12.5 5 h2.5 v7 h-2.5z M29 5 h2.5 v7 h-2.5z M33.5 5 h2.5 v7 h-2.5z" fill="#4c6a76"/>
<circle cx="22" cy="17" r="2.6" fill="#6a5b7a" stroke="#4e4230" stroke-width=".7"/>
<path d="M8.5 29 v-6 a2 2 0 0 1 4 0 v6z M19.5 29 v-6.5 a2.5 2.5 0 0 1 5 0 v6.5z M31 29 v-6 a2 2 0 0 1 4 0 v6z" fill="#6d564b"/>
<path d="M6 14 H38 M6 20.5 H38" stroke="#a58d7b" stroke-width=".9"/><path d="M22 3 L21 11 H23Z" fill="#6d5a50"/></svg>
<svg class="a" style="left:1267px;top:1395.5px;" width="32" height="34" viewBox="0 0 32 34"><defs><linearGradient id="tv1" x1="0" y1="0" x2="1" y2="1"><stop offset="0" stop-color="#4a4a4a"/><stop offset="1" stop-color="#1c1c1c"/></linearGradient><linearGradient id="tv2" x1="0" y1="0" x2="1" y2="1"><stop offset="0" stop-color="#ffffff" stop-opacity=".98"/><stop offset="1" stop-color="#d6d6d6" stop-opacity=".8"/></linearGradient></defs><rect x="1.1" y="8.4" width="22.2" height="24.2" rx="2.6" fill="url(#tv1)"/><rect x="8.5" y="0.5" width="21.8" height="19.6" rx="2.6" fill="url(#tv2)"/></svg>
<svg class="a" style="left:1323px;top:1396px;" width="31" height="28" viewBox="0 0 31 28"><path d="M1 4 a2 2 0 0 1 2-2 H10 L13.5 5.5 H28 a2 2 0 0 1 2 2 V9 H1Z" fill="#e9a41b"/><rect x="1" y="7" width="29" height="19.5" rx="2" fill="#ffd34f"/><path d="M1 18 H30 V24.5 a2 2 0 0 1-2 2 H3 a2 2 0 0 1-2-2Z" fill="#f7b928"/><rect x="8.5" y="19.5" width="14" height="4.2" rx="1" fill="#1f7ad6"/><path d="M5 26.5 H26 V24 a1.5 1.5 0 0 0-1.5-1.5 H6.5 A1.5 1.5 0 0 0 5 24Z" fill="#1563b8"/></svg>
<svg class="a" style="left:1378.5px;top:1395.5px;" width="30" height="30" viewBox="0 0 30 30"><defs><linearGradient id="og" x1="0" y1="0" x2="0" y2="1"><stop offset="0" stop-color="#ff2b3d"/><stop offset="1" stop-color="#b30012"/></linearGradient></defs><circle cx="15" cy="15" r="14.5" fill="url(#og)"/><ellipse cx="14.5" cy="15" rx="6.2" ry="10.2" fill="#cde3f3"/><path d="M19 4.2 a14 14 0 0 1 0 21.6 a10.5 13 0 0 0 0-21.6Z" fill="#8f0010" opacity=".55"/></svg>
<svg class="a" style="left:1432.5px;top:1392px;" width="36" height="34" viewBox="0 0 36 34"><circle cx="15.5" cy="18.5" r="15" fill="#fff"/><path d="M15.5 18.5 L2.5 11 A15 15 0 0 1 28.5 11Z" fill="#e33b2e"/><path d="M15.5 18.5 L28.5 11 A15 15 0 0 1 15.5 33.5Z" fill="#fbc116"/><path d="M15.5 18.5 L15.5 33.5 A15 15 0 0 1 2.5 11Z" fill="#2da94f"/><circle cx="15.5" cy="18.5" r="7" fill="#fff"/><circle cx="15.5" cy="18.5" r="5.4" fill="#3f86f4"/><circle cx="26.5" cy="6.9" r="9.6" fill="#b7b9bb" stroke="#a0a2a4" stroke-width=".8"/><rect x="18" y="5.6" width="17" height="2.4" fill="#cfd0d1"/></svg>
<svg class="a" style="left:1488px;top:1395px;" width="31" height="31" viewBox="0 0 31 31"><rect x="0.3" y="0.3" width="21.8" height="21.8" rx="3" fill="#ededf0"/><path d="M4.2 14.5 V6.2 a2 2 0 0 1 2-2 H15" fill="none" stroke="#d4380d" stroke-width="2.4" stroke-dasharray="2.6 1.8"/><path d="M7 16.3 H19.5 M17.6 5 V18" stroke="#9b9ea2" stroke-width="2"/><path d="M17.6 16.3 L24.5 16 M17.3 16.5 L16.5 24" stroke="#8c9094" stroke-width="1.6"/><circle cx="26.8" cy="15.9" r="2.4" fill="none" stroke="#1b8fe0" stroke-width="1.7"/><circle cx="16" cy="26.3" r="2.4" fill="none" stroke="#1b8fe0" stroke-width="1.7"/></svg>
<svg class="a" style="left:1547px;top:1394px;" width="23" height="32" viewBox="0 0 23 32"><rect x="0.5" y="3" width="21.5" height="26" rx="2.5" fill="#4cb4e9"/><rect x="0.5" y="25" width="21.5" height="5" rx="1.5" fill="#8a4a2d"/><path d="M4 10 H18.5 M4 14 H18.5 M4 18 H18.5 M4 22 H14" stroke="#17507e" stroke-width="1.5"/><rect x="3.5" y="0.5" width="2" height="4.5" rx="1" fill="#2b5f88"/><rect x="8" y="0.5" width="2" height="4.5" rx="1" fill="#2b5f88"/><rect x="12.5" y="0.5" width="2" height="4.5" rx="1" fill="#2b5f88"/><rect x="17" y="0.5" width="2" height="4.5" rx="1" fill="#2b5f88"/></svg>
<svg class="a" style="left:1597.5px;top:1396px;" width="30" height="28" viewBox="0 0 30 28"><rect x="8" y="0.5" width="21" height="27" rx="2" fill="#185c37"/>
<path d="M10 .5 H18.5 V7.2 H8 V2.5 A2 2 0 0 1 10 .5Z" fill="#21a366"/><path d="M18.5 .5 H27 A2 2 0 0 1 29 2.5 V7.2 H18.5Z" fill="#33c481"/>
<rect x="8" y="7.2" width="10.5" height="6.8" fill="#107c41"/><rect x="18.5" y="7.2" width="10.5" height="6.8" fill="#21a366"/><rect x="18.5" y="14" width="10.5" height="6.8" fill="#107c41"/>
<rect x="0.5" y="6" width="16.5" height="16.5" rx="1.6" fill="#107c41"/><path d="M5 9.8 L12.5 18.7 M12.5 9.8 L5 18.7" stroke="#fff" stroke-width="2.3"/></svg>
<div class="a" style="left:1389px;top:1430.4px;width:8px;height:3.3px;background:#7f878d;border-radius:1.7px;"></div>
<div class="a" style="left:1444px;top:1430.4px;width:8px;height:3.3px;background:#7f878d;border-radius:1.7px;"></div>
<div class="a" style="left:1553.8px;top:1430.4px;width:8px;height:3.3px;background:#7f878d;border-radius:1.7px;"></div>
<div class="a" style="left:1609px;top:1430.4px;width:8px;height:3.3px;background:#7f878d;border-radius:1.7px;"></div>
<svg class="a" style="left:2397.5px;top:1405px;" width="15" height="9" viewBox="0 0 15 9"><path d="M1.2 7.8 L7.5 1.5 L13.8 7.8" fill="none" stroke="#1f1f1f" stroke-width="1.7"/></svg>
<svg class="a" style="left:2434px;top:1399px;" width="22" height="21" viewBox="0 0 22 21"><rect x="1" y="2.5" width="15.5" height="11.5" rx="1" fill="none" stroke="#222" stroke-width="1.3"/><path d="M8.5 14 V18 M4 18.5 H13 M17 18.5 H17.5" stroke="#222" stroke-width="1.3"/><rect x="15.2" y="0.8" width="4.6" height="8" rx="1.2" fill="#cde3f3" stroke="#222" stroke-width="1.2"/><path d="M17.5 9 V18.5" stroke="#222" stroke-width="1.3"/><circle cx="17.5" cy="3.6" r=".9" fill="#222"/></svg>
<svg class="a" style="left:2465px;top:1400.5px;" width="21" height="18" viewBox="0 0 21 18"><path d="M1 6.2 H4 L8.5 2 V16 L4 11.8 H1Z" fill="none" stroke="#222" stroke-width="1.3" stroke-linejoin="round"/><path d="M11 5.5 C12.8 7.5 12.8 10.5 11 12.5" fill="none" stroke="#222" stroke-width="1.2"/><path d="M13.8 3.2 C16.6 6.5 16.6 11.5 13.8 14.8" fill="none" stroke="#8a9aa8" stroke-width="1.2"/><path d="M16.6 1 C20.4 5.5 20.4 12.5 16.6 17" fill="none" stroke="#b0bfcb" stroke-width="1.2"/></svg>
<span class="t" style="top:1389.8px;font-size:14.6px;color:#222;right:24.800000000000182px;">8:55</span>
<span class="t" style="top:1410.0px;font-size:14.6px;color:#222;right:24.800000000000182px;">12/8</span>
</body></html>
